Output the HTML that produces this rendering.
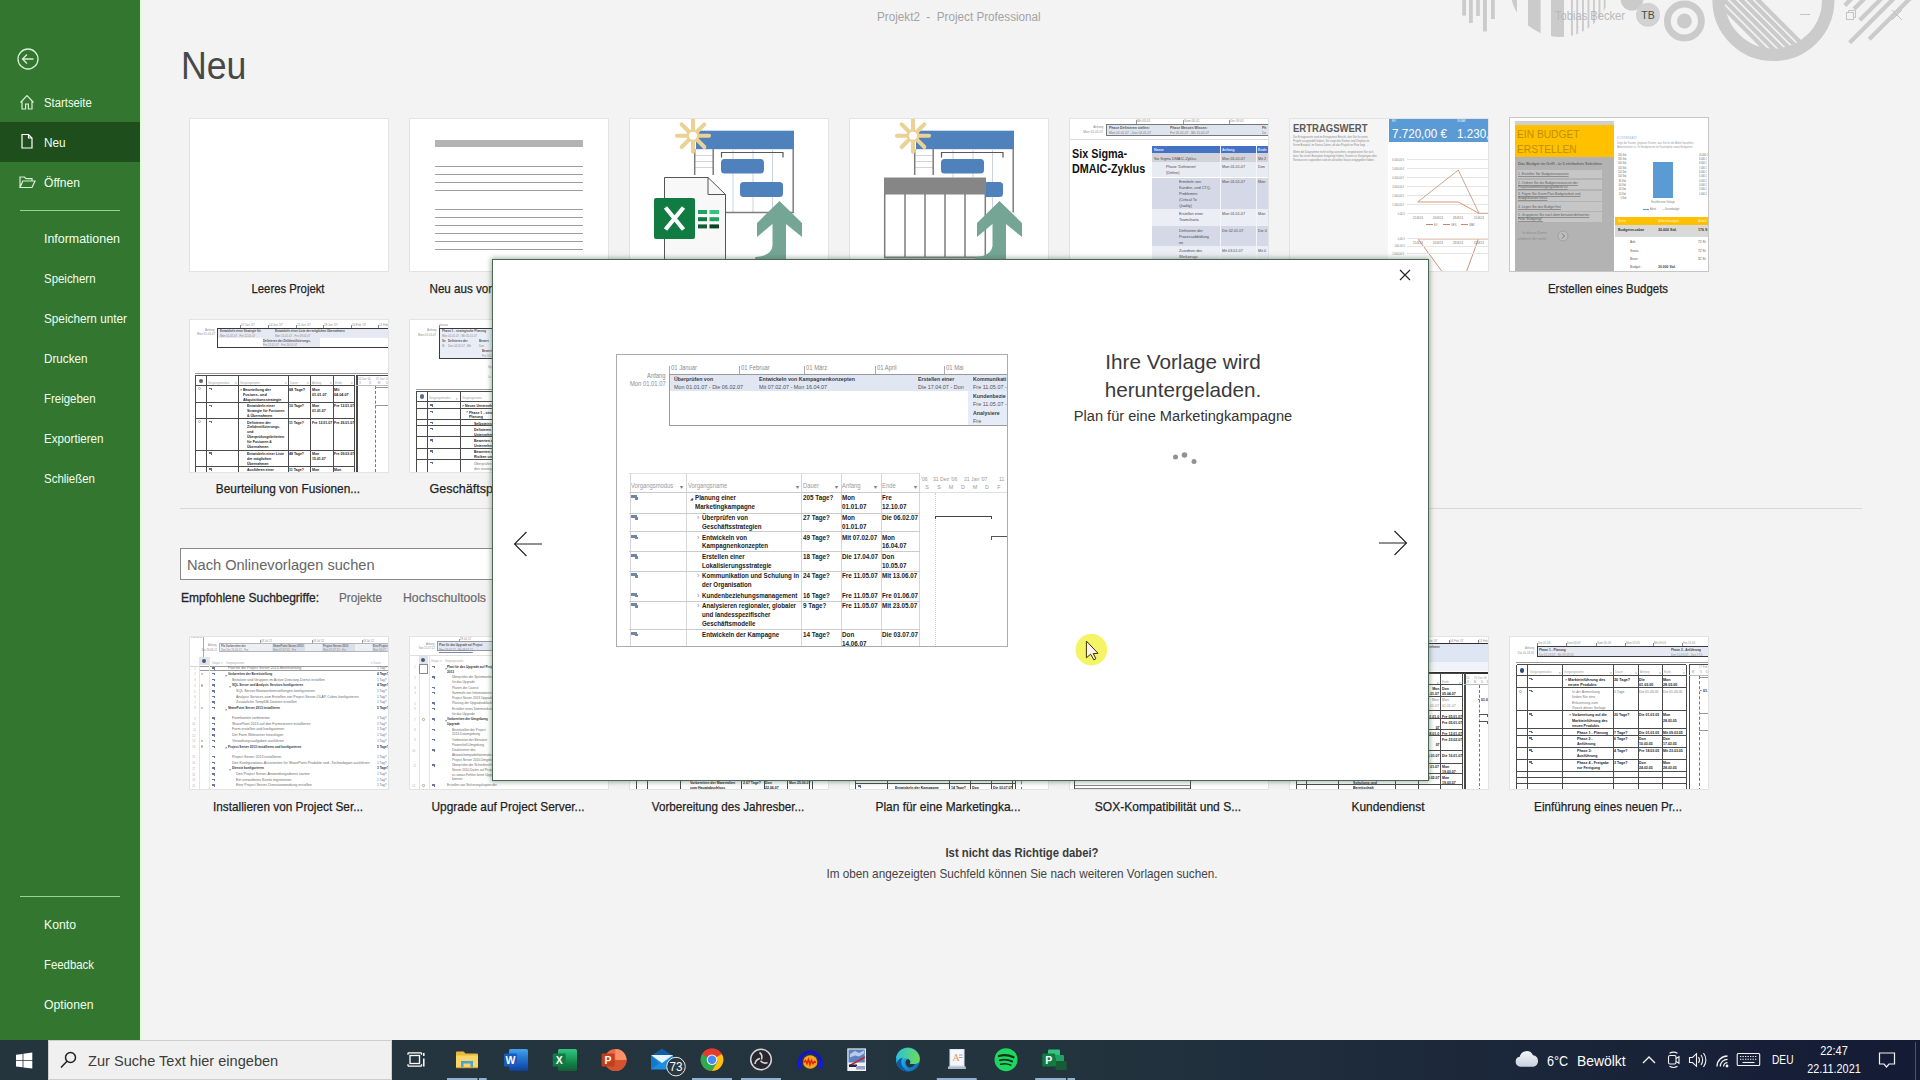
<!DOCTYPE html>
<html lang="de">
<head>
<meta charset="utf-8">
<title>Projekt2 - Project Professional</title>
<style>
*{box-sizing:border-box;margin:0;padding:0}
html,body{width:1920px;height:1080px;overflow:hidden;background:#f3f3f3;font-family:"Liberation Sans",sans-serif;color:#262626}
.abs{position:absolute}
#side{position:absolute;left:0;top:0;width:140px;height:1040px;background:#33762f}
#side .it{position:absolute;left:0;width:140px;height:40px;color:#f1fff0;font-size:12.5px;line-height:40px;padding-left:44px;white-space:nowrap}
#side .sel{background:#1e4e1c;line-height:42px}
#side .sep{position:absolute;left:20px;width:100px;height:1px;background:#9ad195}
#side svg{position:absolute;left:18px;top:10px}
#main{position:absolute;left:140px;top:0;width:1780px;height:1040px;overflow:hidden}
.tile{position:absolute;width:200px;height:154px;background:#fff;border:1px solid #e3e3e3;overflow:hidden}
.lbl{position:absolute;width:220px;margin-left:-1.5px;text-align:center;font-size:12.8px;color:#1f1f1f;white-space:nowrap;line-height:16px;transform:scaleX(.935);-webkit-text-stroke:0.25px #1f1f1f}
.t{position:absolute;white-space:nowrap}
.sx{display:inline-block;transform-origin:0 50%}
#ttl{transform:scaleX(0.935);transform-origin:0 50%}
#h1{transform:scaleX(0.915);transform-origin:0 50%}
#l_r1t1{transform:scaleX(0.885);transform-origin:50% 50%}
#srch{transform:scaleX(1.007);transform-origin:0 50%}
#emp{transform:scaleX(0.961);transform-origin:0 50%}
#proj{transform:scaleX(0.938);transform-origin:0 50%}
#hoch{transform:scaleX(0.979);transform-origin:0 50%}
#usr{transform:scaleX(0.892);transform-origin:0 50%}
#l_r1t7{transform:scaleX(0.893);transform-origin:50% 50%}
#d1{transform:scaleX(0.987);transform-origin:50% 50%}
#d2{transform:scaleX(0.942);transform-origin:50% 50%}
#q1{transform:scaleX(0.882);transform-origin:50% 50%}
#q2{transform:scaleX(0.918);transform-origin:50% 50%}
#l_r3t3{transform:scaleX(0.912);transform-origin:50% 50%}
#l_r3t4{transform:scaleX(0.931);transform-origin:50% 50%}
#l_r3t5{transform:scaleX(0.940);transform-origin:50% 50%}
#l_r3t6{transform:scaleX(0.933);transform-origin:50% 50%}
#l_r3t1{transform:scaleX(0.921);transform-origin:50% 50%}
#l_r2t1{transform:scaleX(0.926);transform-origin:50% 50%}
#l_r3t7{transform:scaleX(0.915);transform-origin:50% 50%}
#tsr{transform:scaleX(0.972);transform-origin:0 50%}
#s4{transform:scaleX(0.994);transform-origin:0 50%}
#s5{transform:scaleX(0.915);transform-origin:0 50%}
#s6{transform:scaleX(0.940);transform-origin:0 50%}
#s7{transform:scaleX(0.935);transform-origin:0 50%}
#s8{transform:scaleX(0.915);transform-origin:0 50%}
#s9{transform:scaleX(0.931);transform-origin:0 50%}
#s10{transform:scaleX(0.917);transform-origin:0 50%}
#s11{transform:scaleX(0.979);transform-origin:0 50%}
#s12{transform:scaleX(0.911);transform-origin:0 50%}
#s13{transform:scaleX(0.976);transform-origin:0 50%}
#s1{transform:scaleX(0.905);transform-origin:0 50%}
#s2{transform:scaleX(0.942);transform-origin:0 50%}
#s3{transform:scaleX(0.965);transform-origin:0 50%}
#tw1{transform:scaleX(0.902);transform-origin:0 50%}
#tw2{transform:scaleX(0.991);transform-origin:0 50%}
#tdeu{transform:scaleX(0.848);transform-origin:0 50%}
#ttime{transform:scaleX(0.916);transform-origin:50% 50%}
#tdate{transform:scaleX(0.902);transform-origin:50% 50%}
#l_r1t2{transform:scaleX(0.908);transform-origin:50% 50%}
#l_r2t2{transform:scaleX(0.981);transform-origin:50% 50%}
#l_r3t2{transform:scaleX(0.927);transform-origin:50% 50%}

</style>
</head>
<body>
<div id="side">
  <svg style="left:16px;top:47px" width="24" height="24" viewBox="0 0 24 24" fill="none" stroke="#d9efd6" stroke-width="1.3"><circle cx="12" cy="12" r="10"/><path d="M17.5 12H7M11 7.5L6.5 12l4.500 4.500"/></svg>
  <div class="it" style="top:83px"><svg width="18" height="18" viewBox="0 0 18 18" fill="none" stroke="#d9efd6" stroke-width="1.2"><path d="M2.500 9.500L9 2.700l6.500 6.800M4 8v8h3.600v-5h2.800v5H14V8"/></svg><span class="sx" id="s1">Startseite</span></div>
  <div class="it sel" style="top:122px"><svg width="18" height="18" viewBox="0 0 18 18" fill="none" stroke="#ffffff" stroke-width="1.2"><path d="M4 2.500h6.500l3.500 3.500v10H4zM10.500 2.500v3.500H14"/></svg><span class="sx" id="s2">Neu</span></div>
  <div class="it" style="top:163px"><svg width="18" height="18" viewBox="0 0 18 18" fill="none" stroke="#d9efd6" stroke-width="1.2"><path d="M2 14.500V4h4.500l1.500 1.700h6V8M2 14.500L4.800 8H17l-3 6.500z"/></svg><span class="sx" id="s3">Öffnen</span></div>
  <div class="sep" style="top:210px"></div>
  <div class="it" style="top:219px"><span class="sx" id="s4">Informationen</span></div>
  <div class="it" style="top:259px"><span class="sx" id="s5">Speichern</span></div>
  <div class="it" style="top:299px"><span class="sx" id="s6">Speichern unter</span></div>
  <div class="it" style="top:339px"><span class="sx" id="s7">Drucken</span></div>
  <div class="it" style="top:379px"><span class="sx" id="s8">Freigeben</span></div>
  <div class="it" style="top:419px"><span class="sx" id="s9">Exportieren</span></div>
  <div class="it" style="top:459px"><span class="sx" id="s10">Schließen</span></div>
  <div class="sep" style="top:896px"></div>
  <div class="it" style="top:905px"><span class="sx" id="s11">Konto</span></div>
  <div class="it" style="top:945px"><span class="sx" id="s12">Feedback</span></div>
  <div class="it" style="top:985px"><span class="sx" id="s13">Optionen</span></div>
</div>
<div class="abs" id="halo" style="left:140px;top:0;width:5px;height:1040px;background:linear-gradient(90deg,#e0fbd9,#ecf7e8 50%,#f3f3f3)"></div>
<div id="main">
<svg class="abs" style="left:1300px;top:0" width="480" height="70" viewBox="1440 0 480 70">
<defs><clipPath id="cpA"><circle cx="1560" cy="-13" r="50"/></clipPath><clipPath id="cpB"><circle cx="1773.400" cy="0" r="49"/></clipPath></defs>
<rect x="1462.2" y="0" width="3.8" height="15.6" fill="#cbcbcb"/>
<rect x="1469" y="0" width="3.8" height="23" fill="#cbcbcb"/>
<rect x="1476.2" y="0" width="3.6" height="16" fill="#cbcbcb"/>
<rect x="1483" y="0" width="3.9" height="31.5" fill="#cbcbcb"/>
<rect x="1491" y="0" width="3.8" height="19" fill="#cbcbcb"/>
<g clip-path="url(#cpA)" fill="#cbcbcb">
<path d="M1508 0H1517V14Z"/>
<rect x="1528" y="0" width="12.6" height="40"/>
<rect x="1551" y="0" width="13" height="40"/>
<rect x="1571" y="0" width="1.900" height="40"/>
<rect x="1576.25" y="0" width="1.900" height="40"/>
<rect x="1582" y="0" width="1.900" height="40"/>
<rect x="1587.5" y="0" width="1.900" height="40"/>
<rect x="1593" y="0" width="1.900" height="40"/>
<rect x="1598.5" y="0" width="1.900" height="40"/>
<rect x="1603.75" y="0" width="1.900" height="40"/>
<rect x="1608" y="0" width="1.900" height="40"/>
</g>
<circle cx="1632" cy="-1" r="11.500" fill="#cbcbcb"/>
<circle cx="1648" cy="14.800" r="12" fill="#d2d2d2"/>
<circle cx="1684.400" cy="21" r="17" fill="none" stroke="#cbcbcb" stroke-width="6.800"/><circle cx="1684.400" cy="21" r="7.400" fill="#cbcbcb"/>
<circle cx="1773.400" cy="0" r="54.800" fill="none" stroke="#cbcbcb" stroke-width="12.500"/>
<g clip-path="url(#cpB)" stroke="#cbcbcb" stroke-width="4.300">
<line x1="1754" y1="-4" x2="1814" y2="56"/>
<line x1="1745.6" y1="-4" x2="1805.6" y2="56"/>
<line x1="1737.2" y1="-4" x2="1797.2" y2="56"/>
<line x1="1728.8" y1="-4" x2="1788.8" y2="56"/>
<line x1="1720.4" y1="-4" x2="1780.4" y2="56"/>
<line x1="1712" y1="-4" x2="1772" y2="56"/>
</g>
<g stroke="#cbcbcb" stroke-width="4.200">
<line x1="1853.2" y1="-3" x2="1844.8" y2="5.4"/>
<line x1="1866" y1="-3" x2="1854" y2="9"/>
<line x1="1883" y1="-3" x2="1859.7" y2="20.3"/>
<line x1="1895.3" y1="-3" x2="1849.6" y2="42.7"/>
<line x1="1911.5" y1="-3" x2="1869.2" y2="39.3"/>
</g>
<g stroke="#c4c4c4" stroke-width="1" fill="none"><path d="M1800 14.500H1810"/><rect x="1846.500" y="12.500" width="7" height="7"/><path d="M1848.500 12.500V10.500H1855.500V17.500H1853.500"/><path d="M1892 10L1902 20M1902 10L1892 20"/></g>
</svg>
<div class="t" id="usr" style="left:1415px;top:8px;font-size:12.500px;line-height:16px;color:#b9b9b9">Tobias Becker</div>
<div class="t" style="left:1498px;top:7px;width:20px;text-align:center;font-size:10.500px;line-height:16px;color:#4a4a4a">TB</div>

  <div class="t" id="ttl" style="left:737px;top:9.200px;font-size:12.5px;color:#a3a3a3;line-height:16px">Projekt2&nbsp; -&nbsp; Project Professional</div>
  <div class="t" id="h1" style="left:40.500px;top:42px;font-size:39px;line-height:48px;color:#484848">Neu</div>
  <!-- row 1 -->
  <div class="tile" id="r1t1" style="left:49px;top:118px"></div>
  <div class="lbl" id="l_r1t1" style="left:39px;top:281px">Leeres Projekt</div>
  <div class="tile" id="r1t2" style="left:269px;top:118px">
    <div class="abs" style="left:25px;top:21px;width:148px;height:7px;background:#b3b3b3"></div><div class="abs" style="left:25px;top:47px;width:148px;height:1px;background:#9d9d9d"></div><div class="abs" style="left:25px;top:55px;width:148px;height:1px;background:#9d9d9d"></div><div class="abs" style="left:25px;top:63px;width:148px;height:1px;background:#9d9d9d"></div><div class="abs" style="left:25px;top:71px;width:148px;height:1px;background:#9d9d9d"></div><div class="abs" style="left:25px;top:90px;width:148px;height:1px;background:#9d9d9d"></div><div class="abs" style="left:25px;top:98px;width:148px;height:1px;background:#9d9d9d"></div><div class="abs" style="left:25px;top:106px;width:148px;height:1px;background:#9d9d9d"></div><div class="abs" style="left:25px;top:114px;width:148px;height:1px;background:#9d9d9d"></div><div class="abs" style="left:25px;top:122px;width:148px;height:1px;background:#9d9d9d"></div><div class="abs" style="left:25px;top:130px;width:148px;height:1px;background:#9d9d9d"></div>
  </div>
  <div class="lbl" id="l_r1t2" style="left:259px;top:281px">Neu aus vorhandenem Projekt</div>
  <div class="tile" id="r1t3" style="left:489px;top:118px"><svg class="abs" style="left:0;top:0" width="198" height="152" viewBox="630 119 198 152">
<rect x="696" y="130.700" width="98" height="18.500" fill="#4f81bd"/>
<g stroke="#c9d3e4" stroke-width="1"><path d="M733 150V212M753 150V212M772.500 150V212"/></g>
<g stroke="#d5d5d5" stroke-width="1"><path d="M695 155.500H713M695 161.500H713M695 167.500H713"/></g>
<g stroke="#7d7d7d" stroke-width="1.500" fill="none"><path d="M694.700 149V175M713.200 149V175M793.200 149V212.500H726"/></g>
<path d="M721.500 157.500V152.500H783V157.500" stroke="#595959" stroke-width="1.200" fill="none"/>
<rect x="721" y="159" width="43" height="14.500" rx="3.500" fill="#4f81bd"/>
<rect x="740" y="182" width="43" height="15" rx="3.500" fill="#4f81bd"/>
<path d="M779.5 201 L802 223 L802 237 L786 224 L786 262 L753.5 262 L755.5 257 Q771.5 256 772.5 246 L772.5 224 L757 237 L757 223 Z" fill="#74a595"/>
<path d="M664.500 177.500H708L725.500 194.500V272H664.500Z" fill="#f8f8f8" stroke="#555" stroke-width="1"/>
<path d="M708 177.500V194.500H725.500" fill="none" stroke="#555" stroke-width="1"/>
<rect x="654" y="198" width="41" height="41" rx="2" fill="#107c41"/>
<path d="M665.500 207.500L683.500 229.500M683.500 207.500L665.500 229.500" stroke="#fff" stroke-width="4.200"/>
<rect x="698" y="210" width="9" height="4" fill="#21a366"/><rect x="709.500" y="210" width="9.500" height="4" fill="#33c481"/>
<rect x="698" y="217.2" width="9" height="4" fill="#107c41"/><rect x="709.500" y="217.2" width="9.500" height="4" fill="#21a366"/>
<rect x="698" y="224.4" width="9" height="4" fill="#185c37"/><rect x="709.500" y="224.4" width="9.500" height="4" fill="#0e4224"/>
<g stroke="#ead194" stroke-width="4.1" stroke-linecap="round"><line x1="699.0" y1="135.7" x2="709.0" y2="135.7"/><line x1="697.2" y1="139.9" x2="704.3" y2="147.0"/><line x1="693.0" y1="141.7" x2="693.0" y2="151.7"/><line x1="688.8" y1="139.9" x2="681.7" y2="147.0"/><line x1="687.0" y1="135.7" x2="677.0" y2="135.7"/><line x1="688.8" y1="131.5" x2="681.7" y2="124.4"/><line x1="693.0" y1="129.7" x2="693.0" y2="119.7"/><line x1="697.2" y1="131.5" x2="704.3" y2="124.4"/></g><circle cx="693" cy="135.7" r="5.200" fill="#fff" stroke="#ead194" stroke-width="2.600"/>
</svg></div>
  <div class="tile" id="r1t4" style="left:709px;top:118px"><svg class="abs" style="left:0;top:0" width="198" height="152" viewBox="850 119 198 152">
<rect x="916" y="130.700" width="98" height="18.500" fill="#4f81bd"/>
<g stroke="#c9d3e4" stroke-width="1"><path d="M953 150V178M973 150V178M992.500 150V212"/></g>
<g stroke="#d5d5d5" stroke-width="1"><path d="M915 155.500H933M915 161.500H933M915 167.500H933"/></g>
<g stroke="#7d7d7d" stroke-width="1.500" fill="none"><path d="M914.700 149V175M933.200 149V175M1013.200 149V212.500"/></g>
<path d="M941.500 157.500V152.500H1003V157.500" stroke="#595959" stroke-width="1.200" fill="none"/>
<rect x="941" y="159" width="43" height="14.500" rx="3.500" fill="#4f81bd"/>
<rect x="980" y="182" width="23" height="15" rx="3.500" fill="#4f81bd"/>
<rect x="884" y="177.500" width="102" height="82" fill="#fff"/>
<rect x="884" y="177.500" width="102" height="17" fill="#868686"/>
<g stroke="#7d7d7d" stroke-width="1.500" fill="none"><path d="M884.700 194V258M905 194V258M925 194V258M945 194V258M965 194V258M985.300 194V258"/><path d="M884 257.500H986" stroke-width="2"/></g>
<path d="M999.5 201 L1022 223 L1022 237 L1006 224 L1006 262 L973.5 262 L975.5 257 Q991.5 256 992.5 246 L992.5 224 L977 237 L977 223 Z" fill="#74a595"/>
<g stroke="#ead194" stroke-width="4.1" stroke-linecap="round"><line x1="919.0" y1="135.7" x2="929.0" y2="135.7"/><line x1="917.2" y1="139.9" x2="924.3" y2="147.0"/><line x1="913.0" y1="141.7" x2="913.0" y2="151.7"/><line x1="908.8" y1="139.9" x2="901.7" y2="147.0"/><line x1="907.0" y1="135.7" x2="897.0" y2="135.7"/><line x1="908.8" y1="131.5" x2="901.7" y2="124.4"/><line x1="913.0" y1="129.7" x2="913.0" y2="119.7"/><line x1="917.2" y1="131.5" x2="924.3" y2="124.4"/></g><circle cx="913" cy="135.7" r="5.200" fill="#fff" stroke="#ead194" stroke-width="2.600"/>
</svg></div>
  <div class="tile" id="r1t5" style="left:929px;top:118px"><div class="t" style="top:-0.4px;font-size:3.6px;line-height:5.6px;color:#8c8c8c;left:67.0px;transform-origin:0 50%;transform:scaleX(0.9);">Mit 03.01</div>
<div class="abs" style="left:66.0px;top:1.0px;width:0.6px;height:3.5px;background:#999;"></div>
<div class="t" style="top:-0.4px;font-size:3.6px;line-height:5.6px;color:#8c8c8c;left:114.0px;transform-origin:0 50%;transform:scaleX(0.9);">Sam 06.01</div>
<div class="abs" style="left:113.0px;top:1.0px;width:0.6px;height:3.5px;background:#999;"></div>
<div class="t" style="top:-0.4px;font-size:3.6px;line-height:5.6px;color:#8c8c8c;left:160.0px;transform-origin:0 50%;transform:scaleX(0.9);">Die 09.01</div>
<div class="abs" style="left:159.0px;top:1.0px;width:0.6px;height:3.5px;background:#999;"></div>
<div class="t" style="top:5.6px;font-size:3.6px;line-height:5.6px;color:#8c8c8c;right:calc(100% - 33.0px);transform-origin:100% 50%;transform:scaleX(0.9);">Anfang</div>
<div class="t" style="top:10.6px;font-size:3.6px;line-height:5.6px;color:#8c8c8c;right:calc(100% - 33.0px);transform-origin:100% 50%;transform:scaleX(0.9);">Mon 01.01.07</div>
<div class="abs" style="left:35.5px;top:4.5px;width:170.0px;height:12.5px;background:#dfe5ee;border:.7px solid #777;"></div>
<div class="t" style="top:6.5px;font-size:3.8px;line-height:5.8px;color:#555;font-weight:bold;left:39.0px;transform-origin:0 50%;transform:scaleX(0.9);">Phase Definieren stellen:</div>
<div class="t" style="top:12.1px;font-size:3.6px;line-height:5.6px;color:#777;left:39.0px;transform-origin:0 50%;transform:scaleX(0.9);">Mon 01.01.07 - Don 04.01.07</div>
<div class="t" style="top:6.5px;font-size:3.8px;line-height:5.8px;color:#555;font-weight:bold;left:100.0px;transform-origin:0 50%;transform:scaleX(0.9);">Phase Messen Wissen:</div>
<div class="t" style="top:12.1px;font-size:3.6px;line-height:5.6px;color:#777;left:100.0px;transform-origin:0 50%;transform:scaleX(0.9);">Fre 05.01.07 - Mit 10.01.07</div>
<div class="t" style="top:6.5px;font-size:3.8px;line-height:5.8px;color:#555;font-weight:bold;left:192.0px;transform-origin:0 50%;transform:scaleX(0.9);">Ph</div>
<div class="t" style="top:12.1px;font-size:3.6px;line-height:5.6px;color:#777;left:192.0px;transform-origin:0 50%;transform:scaleX(0.9);">Do</div>
<div class="abs" style="left:0.0px;top:20.0px;width:199.0px;height:1.0px;background:#d9d9d9;"></div>
<div class="t" style="top:27.5px;font-size:12px;line-height:14px;color:#111;font-weight:bold;left:1.5px;transform-origin:0 50%;transform:scaleX(0.9);">Six Sigma-</div>
<div class="t" style="top:42.7px;font-size:12px;line-height:14px;color:#111;font-weight:bold;left:1.5px;transform-origin:0 50%;transform:scaleX(0.9);">DMAIC-Zyklus</div>
<div class="abs" style="left:82.0px;top:26.7px;width:118.0px;height:7.5px;background:#4472c4;"></div>
<div class="t" style="top:28.4px;font-size:4px;line-height:6px;color:#dfe8ff;font-weight:bold;left:84.0px;transform-origin:0 50%;transform:scaleX(0.9);">Name</div>
<div class="t" style="top:28.4px;font-size:4px;line-height:6px;color:#dfe8ff;font-weight:bold;left:152.0px;transform-origin:0 50%;transform:scaleX(0.9);">Anfang</div>
<div class="t" style="top:28.4px;font-size:4px;line-height:6px;color:#dfe8ff;font-weight:bold;left:188.0px;transform-origin:0 50%;transform:scaleX(0.9);">Ende</div>
<div class="abs" style="left:82.0px;top:34.2px;width:118.0px;height:8.5px;background:#d2d3d9;"></div>
<div class="abs" style="left:82.0px;top:42.7px;width:118.0px;height:15.8px;background:#e9ebf3;"></div>
<div class="abs" style="left:82.0px;top:58.5px;width:118.0px;height:31.5px;background:#d5d9e7;"></div>
<div class="abs" style="left:82.0px;top:90.0px;width:118.0px;height:17.0px;background:#eceef5;"></div>
<div class="abs" style="left:82.0px;top:107.0px;width:118.0px;height:20.0px;background:#d5d9e7;"></div>
<div class="abs" style="left:82.0px;top:127.0px;width:118.0px;height:26.0px;background:#eceef5;"></div>
<div class="abs" style="left:150.0px;top:26.7px;width:0.8px;height:126.3px;background:#f4f5fa;"></div>
<div class="abs" style="left:186.0px;top:26.7px;width:0.8px;height:126.3px;background:#f4f5fa;"></div>
<div class="t" style="top:36.8px;font-size:4.2px;line-height:6.2px;color:#4a4a4a;left:84.0px;transform-origin:0 50%;transform:scaleX(0.9);">Six Sigma DMAIC-Zyklus</div>
<div class="t" style="top:36.8px;font-size:4.2px;line-height:6.2px;color:#4a4a4a;left:152.0px;transform-origin:0 50%;transform:scaleX(0.9);">Mon 01.01.07</div>
<div class="t" style="top:36.8px;font-size:4.2px;line-height:6.2px;color:#4a4a4a;left:188.0px;transform-origin:0 50%;transform:scaleX(0.9);">Mit 2</div>
<div class="t" style="top:45.3px;font-size:4.2px;line-height:6.2px;color:#4a4a4a;left:96.0px;transform-origin:0 50%;transform:scaleX(0.9);">Phase 'Definieren'</div>
<div class="t" style="top:51.4px;font-size:4.2px;line-height:6.2px;color:#4a4a4a;left:96.0px;transform-origin:0 50%;transform:scaleX(0.9);">(Define)</div>
<div class="t" style="top:45.3px;font-size:4.2px;line-height:6.2px;color:#4a4a4a;left:152.0px;transform-origin:0 50%;transform:scaleX(0.9);">Mon 01.01.07</div>
<div class="t" style="top:45.3px;font-size:4.2px;line-height:6.2px;color:#4a4a4a;left:188.0px;transform-origin:0 50%;transform:scaleX(0.9);">Don</div>
<div class="t" style="top:59.8px;font-size:4.2px;line-height:6.2px;color:#4a4a4a;left:109.0px;transform-origin:0 50%;transform:scaleX(0.9);">Ermitteln von</div>
<div class="t" style="top:65.9px;font-size:4.2px;line-height:6.2px;color:#4a4a4a;left:109.0px;transform-origin:0 50%;transform:scaleX(0.9);">Kunden- und CTQ-</div>
<div class="t" style="top:72.0px;font-size:4.2px;line-height:6.2px;color:#4a4a4a;left:109.0px;transform-origin:0 50%;transform:scaleX(0.9);">Problemen</div>
<div class="t" style="top:78.1px;font-size:4.2px;line-height:6.2px;color:#4a4a4a;left:109.0px;transform-origin:0 50%;transform:scaleX(0.9);">(Critical To</div>
<div class="t" style="top:84.2px;font-size:4.2px;line-height:6.2px;color:#4a4a4a;left:109.0px;transform-origin:0 50%;transform:scaleX(0.9);">Quality)</div>
<div class="t" style="top:59.8px;font-size:4.2px;line-height:6.2px;color:#4a4a4a;left:152.0px;transform-origin:0 50%;transform:scaleX(0.9);">Mon 01.01.07</div>
<div class="t" style="top:59.8px;font-size:4.2px;line-height:6.2px;color:#4a4a4a;left:188.0px;transform-origin:0 50%;transform:scaleX(0.9);">Mon</div>
<div class="t" style="top:92.3px;font-size:4.2px;line-height:6.2px;color:#4a4a4a;left:109.0px;transform-origin:0 50%;transform:scaleX(0.9);">Erstellen einer</div>
<div class="t" style="top:98.4px;font-size:4.2px;line-height:6.2px;color:#4a4a4a;left:109.0px;transform-origin:0 50%;transform:scaleX(0.9);">Teamcharta</div>
<div class="t" style="top:92.3px;font-size:4.2px;line-height:6.2px;color:#4a4a4a;left:152.0px;transform-origin:0 50%;transform:scaleX(0.9);">Mon 01.01.07</div>
<div class="t" style="top:92.3px;font-size:4.2px;line-height:6.2px;color:#4a4a4a;left:188.0px;transform-origin:0 50%;transform:scaleX(0.9);">Mon</div>
<div class="t" style="top:108.8px;font-size:4.2px;line-height:6.2px;color:#4a4a4a;left:109.0px;transform-origin:0 50%;transform:scaleX(0.9);">Definieren der</div>
<div class="t" style="top:114.9px;font-size:4.2px;line-height:6.2px;color:#4a4a4a;left:109.0px;transform-origin:0 50%;transform:scaleX(0.9);">Prozessabbildung</div>
<div class="t" style="top:121.0px;font-size:4.2px;line-height:6.2px;color:#4a4a4a;left:109.0px;transform-origin:0 50%;transform:scaleX(0.9);">en</div>
<div class="t" style="top:108.8px;font-size:4.2px;line-height:6.2px;color:#4a4a4a;left:152.0px;transform-origin:0 50%;transform:scaleX(0.9);">Die 02.01.07</div>
<div class="t" style="top:108.8px;font-size:4.2px;line-height:6.2px;color:#4a4a4a;left:188.0px;transform-origin:0 50%;transform:scaleX(0.9);">Die 0</div>
<div class="t" style="top:129.3px;font-size:4.2px;line-height:6.2px;color:#4a4a4a;left:109.0px;transform-origin:0 50%;transform:scaleX(0.9);">Zuordnen des</div>
<div class="t" style="top:135.4px;font-size:4.2px;line-height:6.2px;color:#4a4a4a;left:109.0px;transform-origin:0 50%;transform:scaleX(0.9);">Werkzeugs</div>
<div class="t" style="top:129.3px;font-size:4.2px;line-height:6.2px;color:#4a4a4a;left:152.0px;transform-origin:0 50%;transform:scaleX(0.9);">Mit 03.01.07</div>
<div class="t" style="top:129.3px;font-size:4.2px;line-height:6.2px;color:#4a4a4a;left:188.0px;transform-origin:0 50%;transform:scaleX(0.9);">Mit 0</div>
</div>
  <div class="tile" id="r1t6" style="left:1149px;top:118px"><div class="abs" style="left:0.0px;top:0.0px;width:98.0px;height:152.0px;background:#f5f5f5;"></div>
<div class="t" style="top:2.5px;font-size:11px;line-height:13px;color:#5a5a5a;font-weight:bold;left:3.3px;transform-origin:0 50%;transform:scaleX(0.865);">ERTRAGSWERT</div>
<div class="t" style="top:16.1px;font-size:2.9px;line-height:4.9px;color:#8a8a8a;left:3.3px;transform-origin:0 50%;transform:scaleX(0.93);">Die Ertragswerte sind im Ertragswert-Bericht, den Sie für einen</div>
<div class="t" style="top:19.9px;font-size:2.9px;line-height:4.9px;color:#8a8a8a;left:3.3px;transform-origin:0 50%;transform:scaleX(0.93);">Projekt ausgewählt haben. Sie zeigt den Kosten und Zeitplan im</div>
<div class="t" style="top:23.7px;font-size:2.9px;line-height:4.9px;color:#8a8a8a;left:3.3px;transform-origin:0 50%;transform:scaleX(0.93);">Ihrem Beispiel, im Status-Daten, ob das Projekt im Plan liegt.</div>
<div class="t" style="top:31.2px;font-size:2.9px;line-height:4.9px;color:#8a8a8a;left:3.3px;transform-origin:0 50%;transform:scaleX(0.93);">Wenn die Diagramme nicht richtig aussehen, vergewissern Sie sich,</div>
<div class="t" style="top:35.0px;font-size:2.9px;line-height:4.9px;color:#8a8a8a;left:3.3px;transform-origin:0 50%;transform:scaleX(0.93);">dass Sie einen Basisplan festgelegt haben, Kosten zu Vorgängen oder</div>
<div class="t" style="top:38.8px;font-size:2.9px;line-height:4.9px;color:#8a8a8a;left:3.3px;transform-origin:0 50%;transform:scaleX(0.93);">Ressourcen zugeordnet und ein aktuelles Status eingegeben haben.</div>
<div class="abs" style="left:99.0px;top:-1.0px;width:101.0px;height:23.7px;background:#5b9bd5;"></div>
<div class="t" style="top:0.4px;font-size:3px;line-height:5px;color:#e8f1fb;left:102.0px;transform-origin:0 50%;">EV</div>
<div class="t" style="top:0.4px;font-size:3px;line-height:5px;color:#e8f1fb;left:167.0px;transform-origin:0 50%;">SV/AK</div>
<div class="t" style="top:7.8px;font-size:12.5px;line-height:14.5px;color:#fff;left:101.7px;transform-origin:0 50%;transform:scaleX(0.93);">7.720,00 €</div>
<div class="t" style="top:7.8px;font-size:12.5px;line-height:14.5px;color:#fff;left:166.7px;transform-origin:0 50%;transform:scaleX(0.93);">1.230,</div>
<div class="abs" style="left:116.7px;top:40.0px;width:83.3px;height:0.8px;background:#e6e6e6;"></div>
<div class="t" style="top:38.5px;font-size:2.8px;line-height:4.8px;color:#777;right:calc(100% - 114.5px);transform-origin:100% 50%;transform:scaleX(0.9);">6.000,00 €</div>
<div class="abs" style="left:116.7px;top:49.3px;width:83.3px;height:0.8px;background:#e6e6e6;"></div>
<div class="t" style="top:47.8px;font-size:2.8px;line-height:4.8px;color:#777;right:calc(100% - 114.5px);transform-origin:100% 50%;transform:scaleX(0.9);">5.000,00 €</div>
<div class="abs" style="left:116.7px;top:58.3px;width:83.3px;height:0.8px;background:#e6e6e6;"></div>
<div class="t" style="top:56.8px;font-size:2.8px;line-height:4.8px;color:#777;right:calc(100% - 114.5px);transform-origin:100% 50%;transform:scaleX(0.9);">4.000,00 €</div>
<div class="abs" style="left:116.7px;top:67.3px;width:83.3px;height:0.8px;background:#e6e6e6;"></div>
<div class="t" style="top:65.8px;font-size:2.8px;line-height:4.8px;color:#777;right:calc(100% - 114.5px);transform-origin:100% 50%;transform:scaleX(0.9);">3.000,00 €</div>
<div class="abs" style="left:116.7px;top:76.3px;width:83.3px;height:0.8px;background:#e6e6e6;"></div>
<div class="t" style="top:74.8px;font-size:2.8px;line-height:4.8px;color:#777;right:calc(100% - 114.5px);transform-origin:100% 50%;transform:scaleX(0.9);">2.000,00 €</div>
<div class="abs" style="left:116.7px;top:85.3px;width:83.3px;height:0.8px;background:#e6e6e6;"></div>
<div class="t" style="top:83.8px;font-size:2.8px;line-height:4.8px;color:#777;right:calc(100% - 114.5px);transform-origin:100% 50%;transform:scaleX(0.9);">1.000,00 €</div>
<div class="abs" style="left:116.7px;top:94.3px;width:83.3px;height:0.8px;background:#e6e6e6;"></div>
<div class="t" style="top:92.8px;font-size:2.8px;line-height:4.8px;color:#777;right:calc(100% - 114.5px);transform-origin:100% 50%;transform:scaleX(0.9);">0,00 €</div>
<svg class="abs" style="left:0;top:0" width="198" height="152" viewBox="1290 119 198 152" fill="none" stroke-width=".9"><path d="M1417.700 202L1458.300 170L1479 213.300H1490" stroke="#c49a86"/><path d="M1417.700 202H1458.300L1479 213.300" stroke="#d98b5f"/><path d="M1418.300 239.300L1441.700 271M1466.700 271L1478.300 239.300" stroke="#c8876a"/><path d="M1418 239H1490" stroke="#e0976c"/></svg>
<div class="t" style="top:96.8px;font-size:2.8px;line-height:4.8px;color:#666;left:127.7px;width:0;display:flex;justify-content:center;transform:scaleX(0.9);">21.08.13</div>
<div class="t" style="top:121.5px;font-size:2.8px;line-height:4.8px;color:#666;left:127.7px;width:0;display:flex;justify-content:center;transform:scaleX(0.9);">21.08.13</div>
<div class="t" style="top:96.8px;font-size:2.8px;line-height:4.8px;color:#666;left:148.0px;width:0;display:flex;justify-content:center;transform:scaleX(0.9);">24.08.13</div>
<div class="t" style="top:121.5px;font-size:2.8px;line-height:4.8px;color:#666;left:148.0px;width:0;display:flex;justify-content:center;transform:scaleX(0.9);">24.08.13</div>
<div class="t" style="top:96.8px;font-size:2.8px;line-height:4.8px;color:#666;left:168.3px;width:0;display:flex;justify-content:center;transform:scaleX(0.9);">28.08.13</div>
<div class="t" style="top:121.5px;font-size:2.8px;line-height:4.8px;color:#666;left:168.3px;width:0;display:flex;justify-content:center;transform:scaleX(0.9);">28.08.13</div>
<div class="t" style="top:96.8px;font-size:2.8px;line-height:4.8px;color:#666;left:189.0px;width:0;display:flex;justify-content:center;transform:scaleX(0.9);">31.08.13</div>
<div class="t" style="top:121.5px;font-size:2.8px;line-height:4.8px;color:#666;left:189.0px;width:0;display:flex;justify-content:center;transform:scaleX(0.9);">31.08.13</div>
<div class="t" style="top:103.8px;font-size:2.8px;line-height:4.8px;color:#777;left:144.0px;transform-origin:0 50%;transform:scaleX(0.9);">EV</div>
<div class="abs" style="left:136.0px;top:105.3px;width:7.0px;height:0.7px;background:#c8876a;"></div>
<div class="t" style="top:103.8px;font-size:2.8px;line-height:4.8px;color:#777;left:161.0px;transform-origin:0 50%;transform:scaleX(0.9);">GES</div>
<div class="abs" style="left:153.0px;top:105.3px;width:7.0px;height:0.7px;background:#c8876a;"></div>
<div class="t" style="top:103.8px;font-size:2.8px;line-height:4.8px;color:#777;left:179.0px;transform-origin:0 50%;transform:scaleX(0.9);">WAK</div>
<div class="abs" style="left:171.0px;top:105.3px;width:7.0px;height:0.7px;background:#c8876a;"></div>
<div class="abs" style="left:116.7px;top:119.3px;width:83.3px;height:0.8px;background:#e6e6e6;"></div>
<div class="t" style="top:117.8px;font-size:2.8px;line-height:4.8px;color:#777;right:calc(100% - 114.5px);transform-origin:100% 50%;transform:scaleX(0.9);">0,00 €</div>
<div class="abs" style="left:116.7px;top:126.7px;width:83.3px;height:0.8px;background:#e6e6e6;"></div>
<div class="t" style="top:125.2px;font-size:2.8px;line-height:4.8px;color:#777;right:calc(100% - 114.5px);transform-origin:100% 50%;transform:scaleX(0.9);">-500,00 €</div>
<div class="abs" style="left:116.7px;top:134.3px;width:83.3px;height:0.8px;background:#e6e6e6;"></div>
<div class="t" style="top:132.8px;font-size:2.8px;line-height:4.8px;color:#777;right:calc(100% - 114.5px);transform-origin:100% 50%;transform:scaleX(0.9);">-1.000,00 €</div>
</div>
  <div class="tile" id="r1t7" style="left:1369px;top:116.500px;height:155.500px;border-color:#c6c6c6"><div class="abs" style="left:5.0px;top:3.2px;width:98.5px;height:152.0px;background:#b3b3b3;"></div>
<div class="abs" style="left:5.0px;top:3.2px;width:98.5px;height:4.5px;background:#cfcfcf;"></div>
<div class="abs" style="left:5.0px;top:7.5px;width:98.5px;height:31.7px;background:#ffc000;"></div>
<div class="t" style="top:10.3px;font-size:11px;line-height:13px;color:#bf8f00;left:7.3px;transform-origin:0 50%;transform:scaleX(0.93);">EIN BUDGET</div>
<div class="t" style="top:25.0px;font-size:11px;line-height:13px;color:#bf8f00;left:7.3px;transform-origin:0 50%;transform:scaleX(0.93);">ERSTELLEN</div>
<div class="t" style="top:43.0px;font-size:4.2px;line-height:6.2px;color:#6a6a6a;font-weight:bold;left:7.5px;transform-origin:0 50%;transform:scaleX(0.93);">Das Budget im Griff - in 5 einfachen Schritten</div>
<div class="abs" style="left:6.7px;top:52.5px;width:85.0px;height:8.3px;background:#c6c6c6;"></div>
<div class="t" style="top:54.8px;font-size:3.6px;line-height:5.6px;color:#5e5e5e;left:8.0px;transform-origin:0 50%;transform:scaleX(0.93);text-decoration:underline;text-decoration-color:#8e8e8e;text-decoration-thickness:.4px;">1. Erstellen Sie Budgetressourcen</div>
<div class="abs" style="left:6.7px;top:62.5px;width:85.0px;height:9.3px;background:#c6c6c6;"></div>
<div class="t" style="top:63.0px;font-size:3.6px;line-height:5.6px;color:#5e5e5e;left:8.0px;transform-origin:0 50%;transform:scaleX(0.93);text-decoration:underline;text-decoration-color:#8e8e8e;text-decoration-thickness:.4px;">2. Ordnen Sie die Budgetressourcen der</div>
<div class="t" style="top:67.6px;font-size:3.6px;line-height:5.6px;color:#5e5e5e;left:8.0px;transform-origin:0 50%;transform:scaleX(0.93);text-decoration:underline;text-decoration-color:#8e8e8e;text-decoration-thickness:.4px;">Projektsammelvorgangsebene zu</div>
<div class="abs" style="left:6.7px;top:73.2px;width:85.0px;height:10.0px;background:#c6c6c6;"></div>
<div class="t" style="top:74.0px;font-size:3.6px;line-height:5.6px;color:#5e5e5e;left:8.0px;transform-origin:0 50%;transform:scaleX(0.93);text-decoration:underline;text-decoration-color:#8e8e8e;text-decoration-thickness:.4px;">3. Fügen Sie Ihrem Plan Budgetarbeit und</div>
<div class="t" style="top:78.6px;font-size:3.6px;line-height:5.6px;color:#5e5e5e;left:8.0px;transform-origin:0 50%;transform:scaleX(0.93);text-decoration:underline;text-decoration-color:#8e8e8e;text-decoration-thickness:.4px;">Budgetkosten hinzu</div>
<div class="abs" style="left:6.7px;top:84.8px;width:85.0px;height:8.4px;background:#c6c6c6;"></div>
<div class="t" style="top:87.1px;font-size:3.6px;line-height:5.6px;color:#5e5e5e;left:8.0px;transform-origin:0 50%;transform:scaleX(0.93);text-decoration:underline;text-decoration-color:#8e8e8e;text-decoration-thickness:.4px;">4. Legen Sie das Budget fest</div>
<div class="abs" style="left:6.7px;top:94.8px;width:85.0px;height:9.4px;background:#c6c6c6;"></div>
<div class="t" style="top:95.3px;font-size:3.6px;line-height:5.6px;color:#5e5e5e;left:8.0px;transform-origin:0 50%;transform:scaleX(0.93);text-decoration:underline;text-decoration-color:#8e8e8e;text-decoration-thickness:.4px;">5. Gruppieren Sie nach dem benutzerdefinierten</div>
<div class="t" style="top:99.9px;font-size:3.6px;line-height:5.6px;color:#5e5e5e;left:8.0px;transform-origin:0 50%;transform:scaleX(0.93);text-decoration:underline;text-decoration-color:#8e8e8e;text-decoration-thickness:.4px;">Feld "Budgettyp"</div>
<div class="t" style="top:113.8px;font-size:3.8px;line-height:5.8px;color:#8a8a8a;right:calc(100% - 36.5px);transform-origin:100% 50%;transform:scaleX(0.95);font-style:italic;">In dieser Demo</div>
<div class="t" style="top:119.2px;font-size:3.8px;line-height:5.8px;color:#8a8a8a;right:calc(100% - 36.5px);transform-origin:100% 50%;transform:scaleX(0.95);font-style:italic;">erfahren Sie mehr</div>
<svg class="abs" style="left:46.500px;top:112px" width="12" height="12" viewBox="0 0 12 12"><circle cx="6" cy="6" r="5" fill="#bdbdbd" stroke="#9a9a9a" stroke-width=".8"/><path d="M5 3.500L7.500 6L5 8.500" fill="none" stroke="#777" stroke-width="1"/></svg>
<div class="t" style="top:18.8px;font-size:3.2px;line-height:5.2px;color:#8fbbe5;left:106.7px;transform-origin:0 50%;transform:scaleX(0.95);">KOSTENSATZ</div>
<div class="t" style="top:23.7px;font-size:2.8px;line-height:4.8px;color:#999;left:106.7px;transform-origin:0 50%;transform:scaleX(0.93);">Zeigt die Kosten, geplante Kosten, was Sie für die Arbeit bezahlen,</div>
<div class="t" style="top:27.0px;font-size:2.8px;line-height:4.8px;color:#999;left:106.7px;transform-origin:0 50%;transform:scaleX(0.93);">Arbeitskosten vs. Ihr Budgetieren im Kostenplan sowie Budgetiert</div>
<div class="t" style="top:36.1px;font-size:2.6px;line-height:4.6px;color:#666;right:calc(100% - 116.5px);transform-origin:100% 50%;transform:scaleX(0.9);">200 Std.</div>
<div class="t" style="top:36.1px;font-size:2.6px;line-height:4.6px;color:#666;left:189.0px;transform-origin:0 50%;transform:scaleX(0.9);">10.000 €</div>
<div class="t" style="top:40.4px;font-size:2.6px;line-height:4.6px;color:#666;right:calc(100% - 116.5px);transform-origin:100% 50%;transform:scaleX(0.9);">180 Std.</div>
<div class="t" style="top:40.4px;font-size:2.6px;line-height:4.6px;color:#666;left:189.0px;transform-origin:0 50%;transform:scaleX(0.9);">9.000 €</div>
<div class="t" style="top:44.8px;font-size:2.6px;line-height:4.6px;color:#666;right:calc(100% - 116.5px);transform-origin:100% 50%;transform:scaleX(0.9);">160 Std.</div>
<div class="t" style="top:44.8px;font-size:2.6px;line-height:4.6px;color:#666;left:189.0px;transform-origin:0 50%;transform:scaleX(0.9);">8.000 €</div>
<div class="t" style="top:49.1px;font-size:2.6px;line-height:4.6px;color:#666;right:calc(100% - 116.5px);transform-origin:100% 50%;transform:scaleX(0.9);">140 Std.</div>
<div class="t" style="top:49.1px;font-size:2.6px;line-height:4.6px;color:#666;left:189.0px;transform-origin:0 50%;transform:scaleX(0.9);">7.000 €</div>
<div class="t" style="top:53.4px;font-size:2.6px;line-height:4.6px;color:#666;right:calc(100% - 116.5px);transform-origin:100% 50%;transform:scaleX(0.9);">120 Std.</div>
<div class="t" style="top:53.4px;font-size:2.6px;line-height:4.6px;color:#666;left:189.0px;transform-origin:0 50%;transform:scaleX(0.9);">6.000 €</div>
<div class="t" style="top:57.8px;font-size:2.6px;line-height:4.6px;color:#666;right:calc(100% - 116.5px);transform-origin:100% 50%;transform:scaleX(0.9);">100 Std.</div>
<div class="t" style="top:57.8px;font-size:2.6px;line-height:4.6px;color:#666;left:189.0px;transform-origin:0 50%;transform:scaleX(0.9);">5.000 €</div>
<div class="t" style="top:62.1px;font-size:2.6px;line-height:4.6px;color:#666;right:calc(100% - 116.5px);transform-origin:100% 50%;transform:scaleX(0.9);">80 Std.</div>
<div class="t" style="top:62.1px;font-size:2.6px;line-height:4.6px;color:#666;left:189.0px;transform-origin:0 50%;transform:scaleX(0.9);">4.000 €</div>
<div class="t" style="top:66.4px;font-size:2.6px;line-height:4.6px;color:#666;right:calc(100% - 116.5px);transform-origin:100% 50%;transform:scaleX(0.9);">60 Std.</div>
<div class="t" style="top:66.4px;font-size:2.6px;line-height:4.6px;color:#666;left:189.0px;transform-origin:0 50%;transform:scaleX(0.9);">3.000 €</div>
<div class="t" style="top:70.7px;font-size:2.6px;line-height:4.6px;color:#666;right:calc(100% - 116.5px);transform-origin:100% 50%;transform:scaleX(0.9);">40 Std.</div>
<div class="t" style="top:70.7px;font-size:2.6px;line-height:4.6px;color:#666;left:189.0px;transform-origin:0 50%;transform:scaleX(0.9);">2.000 €</div>
<div class="t" style="top:75.1px;font-size:2.6px;line-height:4.6px;color:#666;right:calc(100% - 116.5px);transform-origin:100% 50%;transform:scaleX(0.9);">20 Std.</div>
<div class="t" style="top:75.1px;font-size:2.6px;line-height:4.6px;color:#666;left:189.0px;transform-origin:0 50%;transform:scaleX(0.9);">1.000 €</div>
<div class="t" style="top:79.4px;font-size:2.6px;line-height:4.6px;color:#666;right:calc(100% - 116.5px);transform-origin:100% 50%;transform:scaleX(0.9);">0 Std.</div>
<div class="abs" style="left:142.7px;top:44.2px;width:20.0px;height:36.7px;background:#5b9bd5;"></div>
<div class="t" style="top:83.1px;font-size:2.6px;line-height:4.6px;color:#777;left:152.7px;width:0;display:flex;justify-content:center;transform:scaleX(0.9);">Erstellen einer Vorlage</div>
<div class="abs" style="left:133.0px;top:91.8px;width:6.0px;height:1.2px;background:#5b9bd5;"></div>
<div class="t" style="top:90.4px;font-size:2.6px;line-height:4.6px;color:#777;left:140.0px;transform-origin:0 50%;transform:scaleX(0.9);">Arbeit</div>
<div class="t" style="top:90.4px;font-size:2.6px;line-height:4.6px;color:#777;left:152.0px;transform-origin:0 50%;transform:scaleX(0.9);">— Kostenbudget</div>
<div class="abs" style="left:105.0px;top:99.2px;width:95.0px;height:8.5px;background:#ffc000;"></div>
<div class="t" style="top:101.7px;font-size:3.4px;line-height:5.4px;color:#ffe9a6;font-weight:bold;left:107.5px;transform-origin:0 50%;transform:scaleX(0.9);">Name</div>
<div class="t" style="top:101.7px;font-size:3.4px;line-height:5.4px;color:#ffe9a6;font-weight:bold;left:147.5px;transform-origin:0 50%;transform:scaleX(0.9);">Arbeitsbudget</div>
<div class="t" style="top:101.7px;font-size:3.4px;line-height:5.4px;color:#ffe9a6;font-weight:bold;left:187.5px;transform-origin:0 50%;transform:scaleX(0.9);">Arbeit</div>
<div class="abs" style="left:105.0px;top:107.7px;width:95.0px;height:12.0px;background:#d9d9d9;"></div>
<div class="t" style="top:109.4px;font-size:4px;line-height:6px;color:#333;font-weight:bold;left:107.5px;transform-origin:0 50%;transform:scaleX(0.9);">Budgetm.cabar</div>
<div class="t" style="top:109.4px;font-size:4px;line-height:6px;color:#333;font-weight:bold;left:147.5px;transform-origin:0 50%;transform:scaleX(0.9);">30.000 Std.</div>
<div class="t" style="top:109.4px;font-size:4px;line-height:6px;color:#333;font-weight:bold;left:187.5px;transform-origin:0 50%;transform:scaleX(0.9);">176 S</div>
<div class="t" style="top:122.9px;font-size:3.6px;line-height:5.6px;color:#555;left:120.0px;transform-origin:0 50%;transform:scaleX(0.9);">Ask</div>
<div class="t" style="top:122.9px;font-size:3.6px;line-height:5.6px;color:#555;left:187.5px;transform-origin:0 50%;transform:scaleX(0.9);">72 St</div>
<div class="t" style="top:131.3px;font-size:3.6px;line-height:5.6px;color:#555;left:120.0px;transform-origin:0 50%;transform:scaleX(0.9);">Sonia</div>
<div class="t" style="top:131.3px;font-size:3.6px;line-height:5.6px;color:#555;left:187.5px;transform-origin:0 50%;transform:scaleX(0.9);">72 St</div>
<div class="t" style="top:139.6px;font-size:3.6px;line-height:5.6px;color:#555;left:120.0px;transform-origin:0 50%;transform:scaleX(0.9);">Brian</div>
<div class="t" style="top:139.6px;font-size:3.6px;line-height:5.6px;color:#555;left:187.5px;transform-origin:0 50%;transform:scaleX(0.9);">32 St</div>
<div class="t" style="top:147.9px;font-size:3.6px;line-height:5.6px;color:#555;left:120.0px;transform-origin:0 50%;transform:scaleX(0.9);">Budget :</div>
<div class="t" style="top:147.8px;font-size:3.8px;line-height:5.8px;color:#444;font-weight:bold;left:147.5px;transform-origin:0 50%;transform:scaleX(0.9);">30.000 Std.</div>
</div>
  <div class="lbl" id="l_r1t7" style="left:1359px;top:281px">Erstellen eines Budgets</div>
  <!-- row 2 -->
  <div class="tile" id="r2t1" style="left:49px;top:319px"><div class="t" style="top:3.2px;font-size:3.3px;line-height:5.3px;color:#8c8c8c;left:51.3px;transform-origin:0 50%;transform:scaleX(0.9);">07 Jan '07</div>
<div class="abs" style="left:50.3px;top:4.5px;width:0.6px;height:4.0px;background:#888;"></div>
<div class="t" style="top:3.2px;font-size:3.3px;line-height:5.3px;color:#8c8c8c;left:79.2px;transform-origin:0 50%;transform:scaleX(0.9);">14 Jan '07</div>
<div class="abs" style="left:78.2px;top:4.5px;width:0.6px;height:4.0px;background:#888;"></div>
<div class="t" style="top:3.2px;font-size:3.3px;line-height:5.3px;color:#8c8c8c;left:106.7px;transform-origin:0 50%;transform:scaleX(0.9);">21 Jan '07</div>
<div class="abs" style="left:105.7px;top:4.5px;width:0.6px;height:4.0px;background:#888;"></div>
<div class="t" style="top:3.2px;font-size:3.3px;line-height:5.3px;color:#8c8c8c;left:134.2px;transform-origin:0 50%;transform:scaleX(0.9);">28 Jan '07</div>
<div class="abs" style="left:133.2px;top:4.5px;width:0.6px;height:4.0px;background:#888;"></div>
<div class="t" style="top:3.2px;font-size:3.3px;line-height:5.3px;color:#8c8c8c;left:161.7px;transform-origin:0 50%;transform:scaleX(0.9);">04 Feb '07</div>
<div class="abs" style="left:160.7px;top:4.5px;width:0.6px;height:4.0px;background:#888;"></div>
<div class="t" style="top:3.2px;font-size:3.3px;line-height:5.3px;color:#8c8c8c;left:188.8px;transform-origin:0 50%;transform:scaleX(0.9);">11 Feb</div>
<div class="abs" style="left:187.8px;top:4.5px;width:0.6px;height:4.0px;background:#888;"></div>
<div class="t" style="top:7.7px;font-size:3.3px;line-height:5.3px;color:#8c8c8c;right:calc(100% - 24.8px);transform-origin:100% 50%;transform:scaleX(0.9);">Anfang</div>
<div class="t" style="top:12.4px;font-size:3.3px;line-height:5.3px;color:#8c8c8c;right:calc(100% - 24.8px);transform-origin:100% 50%;transform:scaleX(0.9);">Mon 01.01.07</div>
<div class="abs" style="left:27.3px;top:8.5px;width:180.0px;height:9.5px;background:#e6e9f1;"></div>
<div class="abs" style="left:73.0px;top:18.0px;width:57.0px;height:9.0px;background:#e6e9f1;"></div>
<div class="abs" style="left:27.3px;top:8.0px;width:180.0px;height:19.5px;background:transparent;border:1px solid #3a3a3a;"></div>
<div class="t" style="top:9.2px;font-size:3.3px;line-height:5.3px;color:#555;font-weight:bold;left:30.0px;transform-origin:0 50%;transform:scaleX(0.88);">Entwickeln einer Strategie für</div>
<div class="t" style="top:13.7px;font-size:3.1px;line-height:5.1px;color:#8a8a8a;left:30.0px;transform-origin:0 50%;transform:scaleX(0.9);">Mon 01.01.07 - Fre 12.01.07</div>
<div class="t" style="top:9.2px;font-size:3.3px;line-height:5.3px;color:#555;font-weight:bold;left:85.3px;transform-origin:0 50%;transform:scaleX(0.88);">Entwickeln einer Liste der möglichen Übernahmen</div>
<div class="t" style="top:13.7px;font-size:3.1px;line-height:5.1px;color:#8a8a8a;left:85.3px;transform-origin:0 50%;transform:scaleX(0.9);">Mon 15.01.07 - Fre 09.03.07</div>
<div class="t" style="top:18.5px;font-size:3.3px;line-height:5.3px;color:#555;font-weight:bold;left:73.3px;transform-origin:0 50%;transform:scaleX(0.88);">Definieren der Zielidentifizierungs-</div>
<div class="t" style="top:23.0px;font-size:3.1px;line-height:5.1px;color:#8a8a8a;left:73.3px;transform-origin:0 50%;transform:scaleX(0.9);">Fre 12.01.07 - Fre 26.01.07</div>
<div class="abs" style="left:5.0px;top:52.8px;width:195.0px;height:1.2px;background:#9a9a9a;"></div>
<div class="abs" style="left:5.0px;top:55.4px;width:1.0px;height:96.6px;background:#4a4a4a;"></div>
<div class="abs" style="left:16.2px;top:55.4px;width:1.0px;height:96.6px;background:#4a4a4a;"></div>
<div class="abs" style="left:47.9px;top:55.4px;width:1.0px;height:96.6px;background:#4a4a4a;"></div>
<div class="abs" style="left:98.1px;top:55.4px;width:1.0px;height:96.6px;background:#4a4a4a;"></div>
<div class="abs" style="left:120.1px;top:55.4px;width:1.0px;height:96.6px;background:#4a4a4a;"></div>
<div class="abs" style="left:142.9px;top:55.4px;width:1.0px;height:96.6px;background:#4a4a4a;"></div>
<div class="abs" style="left:164.1px;top:55.4px;width:1.0px;height:96.6px;background:#4a4a4a;"></div>
<div class="abs" style="left:5.5px;top:54.9px;width:159.5px;height:1.0px;background:#4a4a4a;"></div>
<div class="abs" style="left:5.5px;top:64.6px;width:159.5px;height:1.0px;background:#4a4a4a;"></div>
<div class="abs" style="left:5.5px;top:82.0px;width:159.5px;height:1.0px;background:#4a4a4a;"></div>
<div class="abs" style="left:5.5px;top:97.7px;width:159.5px;height:1.0px;background:#4a4a4a;"></div>
<div class="abs" style="left:5.5px;top:129.8px;width:159.5px;height:1.0px;background:#4a4a4a;"></div>
<div class="abs" style="left:5.5px;top:146.1px;width:159.5px;height:1.0px;background:#4a4a4a;"></div>
<div class="abs" style="left:8.8px;top:59.1px;width:4.4px;height:4.4px;border-radius:50%;background:#666"></div>
<div class="t" style="top:60.7px;font-size:3.3px;line-height:5.3px;color:#a0a0a0;left:17.7px;transform-origin:0 50%;transform:scaleX(0.9);">Vorgangsmodus</div>
<div class="t" style="top:60.7px;font-size:3.3px;line-height:5.3px;color:#a0a0a0;left:50.3px;transform-origin:0 50%;transform:scaleX(0.9);">Vorgangsname</div>
<div class="t" style="top:60.7px;font-size:3.3px;line-height:5.3px;color:#a0a0a0;left:100.2px;transform-origin:0 50%;transform:scaleX(0.9);">Dauer</div>
<div class="t" style="top:60.7px;font-size:3.3px;line-height:5.3px;color:#a0a0a0;left:122.2px;transform-origin:0 50%;transform:scaleX(0.9);">Anfang</div>
<div class="t" style="top:60.7px;font-size:3.3px;line-height:5.3px;color:#a0a0a0;left:145.0px;transform-origin:0 50%;transform:scaleX(0.9);">Ende</div>
<div class="t" style="top:61.4px;font-size:3px;line-height:5px;color:#888;left:45.5px;width:0;display:flex;justify-content:center;">▾</div>
<div class="t" style="top:61.4px;font-size:3px;line-height:5px;color:#888;left:95.5px;width:0;display:flex;justify-content:center;">▾</div>
<div class="t" style="top:61.4px;font-size:3px;line-height:5px;color:#888;left:117.5px;width:0;display:flex;justify-content:center;">▾</div>
<div class="t" style="top:61.4px;font-size:3px;line-height:5px;color:#888;left:140.5px;width:0;display:flex;justify-content:center;">▾</div>
<div class="t" style="top:61.4px;font-size:3px;line-height:5px;color:#888;left:161.5px;width:0;display:flex;justify-content:center;">▾</div>
<div class="t" style="top:67.5px;font-size:2.4px;line-height:4.4px;color:#333;left:50.0px;transform-origin:0 50%;">◢</div>
<div class="abs" style="left:18.7px;top:67.8px;width:3.0px;height:1.6px;background:#5b6f94;"></div>
<div class="abs" style="left:20.7px;top:69.1px;width:1.6px;height:1.3px;background:#5b6f94;"></div>
<div class="t" style="top:66.5px;font-size:4.3px;line-height:6.3px;color:#222;font-weight:bold;left:53.0px;transform-origin:0 50%;transform:scaleX(0.88);">Beurteilung der</div>
<div class="t" style="top:71.7px;font-size:4.3px;line-height:6.3px;color:#222;font-weight:bold;left:53.0px;transform-origin:0 50%;transform:scaleX(0.88);">Fusions- und</div>
<div class="t" style="top:76.9px;font-size:4.3px;line-height:6.3px;color:#222;font-weight:bold;left:53.0px;transform-origin:0 50%;transform:scaleX(0.88);">Akquisitionsstrategie</div>
<div class="t" style="top:66.5px;font-size:4.3px;line-height:6.3px;color:#222;font-weight:bold;left:99.2px;transform-origin:0 50%;transform:scaleX(0.88);">68 Tage?</div>
<div class="t" style="top:66.5px;font-size:4.3px;line-height:6.3px;color:#222;font-weight:bold;left:121.6px;transform-origin:0 50%;transform:scaleX(0.88);">Mon</div>
<div class="t" style="top:71.7px;font-size:4.3px;line-height:6.3px;color:#222;font-weight:bold;left:121.6px;transform-origin:0 50%;transform:scaleX(0.88);">01.01.07</div>
<div class="t" style="top:66.5px;font-size:4.3px;line-height:6.3px;color:#222;font-weight:bold;left:144.0px;transform-origin:0 50%;transform:scaleX(0.88);">Mit</div>
<div class="t" style="top:71.7px;font-size:4.3px;line-height:6.3px;color:#222;font-weight:bold;left:144.0px;transform-origin:0 50%;transform:scaleX(0.88);">04.04.07</div>
<div class="abs" style="left:18.7px;top:84.5px;width:3.0px;height:1.6px;background:#5b6f94;"></div>
<div class="abs" style="left:20.7px;top:85.8px;width:1.6px;height:1.3px;background:#5b6f94;"></div>
<div class="t" style="top:83.4px;font-size:4px;line-height:6px;color:#222;font-weight:bold;left:57.4px;transform-origin:0 50%;transform:scaleX(0.88);">Entwickeln einer</div>
<div class="t" style="top:88.3px;font-size:4px;line-height:6px;color:#222;font-weight:bold;left:57.4px;transform-origin:0 50%;transform:scaleX(0.88);">Strategie für Fusionen</div>
<div class="t" style="top:93.2px;font-size:4px;line-height:6px;color:#222;font-weight:bold;left:57.4px;transform-origin:0 50%;transform:scaleX(0.88);">&amp; Übernahmen</div>
<div class="t" style="top:83.4px;font-size:4px;line-height:6px;color:#222;font-weight:bold;left:99.2px;transform-origin:0 50%;transform:scaleX(0.88);">10 Tage?</div>
<div class="t" style="top:83.4px;font-size:4px;line-height:6px;color:#222;font-weight:bold;left:121.6px;transform-origin:0 50%;transform:scaleX(0.88);">Mon</div>
<div class="t" style="top:88.3px;font-size:4px;line-height:6px;color:#222;font-weight:bold;left:121.6px;transform-origin:0 50%;transform:scaleX(0.88);">01.01.07</div>
<div class="t" style="top:83.4px;font-size:4px;line-height:6px;color:#222;font-weight:bold;left:144.0px;transform-origin:0 50%;transform:scaleX(0.88);">Fre 12.01.07</div>
<div class="abs" style="left:18.7px;top:100.6px;width:3.0px;height:1.6px;background:#5b6f94;"></div>
<div class="abs" style="left:20.7px;top:101.9px;width:1.6px;height:1.3px;background:#5b6f94;"></div>
<div class="t" style="top:99.5px;font-size:4px;line-height:6px;color:#222;font-weight:bold;left:57.4px;transform-origin:0 50%;transform:scaleX(0.88);">Definieren der</div>
<div class="t" style="top:104.4px;font-size:4px;line-height:6px;color:#222;font-weight:bold;left:57.4px;transform-origin:0 50%;transform:scaleX(0.88);">Zielidentifizierungs-</div>
<div class="t" style="top:109.4px;font-size:4px;line-height:6px;color:#222;font-weight:bold;left:57.4px;transform-origin:0 50%;transform:scaleX(0.88);">und</div>
<div class="t" style="top:114.4px;font-size:4px;line-height:6px;color:#222;font-weight:bold;left:57.4px;transform-origin:0 50%;transform:scaleX(0.88);">Überprüfungskriterien</div>
<div class="t" style="top:119.3px;font-size:4px;line-height:6px;color:#222;font-weight:bold;left:57.4px;transform-origin:0 50%;transform:scaleX(0.88);">für Fusionen &amp;</div>
<div class="t" style="top:124.2px;font-size:4px;line-height:6px;color:#222;font-weight:bold;left:57.4px;transform-origin:0 50%;transform:scaleX(0.88);">Übernahmen</div>
<div class="t" style="top:99.5px;font-size:4px;line-height:6px;color:#222;font-weight:bold;left:99.2px;transform-origin:0 50%;transform:scaleX(0.88);">11 Tage?</div>
<div class="t" style="top:99.5px;font-size:4px;line-height:6px;color:#222;font-weight:bold;left:121.6px;transform-origin:0 50%;transform:scaleX(0.88);">Fre 12.01.07</div>
<div class="t" style="top:99.5px;font-size:4px;line-height:6px;color:#222;font-weight:bold;left:144.0px;transform-origin:0 50%;transform:scaleX(0.88);">Fre 26.01.07</div>
<div class="abs" style="left:18.7px;top:132.2px;width:3.0px;height:1.6px;background:#5b6f94;"></div>
<div class="abs" style="left:20.7px;top:133.5px;width:1.6px;height:1.3px;background:#5b6f94;"></div>
<div class="t" style="top:131.1px;font-size:4px;line-height:6px;color:#222;font-weight:bold;left:57.4px;transform-origin:0 50%;transform:scaleX(0.88);">Entwickeln einer Liste</div>
<div class="t" style="top:136.1px;font-size:4px;line-height:6px;color:#222;font-weight:bold;left:57.4px;transform-origin:0 50%;transform:scaleX(0.88);">der möglichen</div>
<div class="t" style="top:141.1px;font-size:4px;line-height:6px;color:#222;font-weight:bold;left:57.4px;transform-origin:0 50%;transform:scaleX(0.88);">Übernahmen</div>
<div class="t" style="top:131.1px;font-size:4px;line-height:6px;color:#222;font-weight:bold;left:99.2px;transform-origin:0 50%;transform:scaleX(0.88);">48 Tage?</div>
<div class="t" style="top:131.1px;font-size:4px;line-height:6px;color:#222;font-weight:bold;left:121.6px;transform-origin:0 50%;transform:scaleX(0.88);">Mon</div>
<div class="t" style="top:136.1px;font-size:4px;line-height:6px;color:#222;font-weight:bold;left:121.6px;transform-origin:0 50%;transform:scaleX(0.88);">15.01.07</div>
<div class="t" style="top:131.1px;font-size:4px;line-height:6px;color:#222;font-weight:bold;left:144.0px;transform-origin:0 50%;transform:scaleX(0.88);">Fre 09.03.07</div>
<div class="abs" style="left:18.7px;top:148.3px;width:3.0px;height:1.6px;background:#5b6f94;"></div>
<div class="abs" style="left:20.7px;top:149.6px;width:1.6px;height:1.3px;background:#5b6f94;"></div>
<div class="t" style="top:147.2px;font-size:4px;line-height:6px;color:#222;font-weight:bold;left:57.4px;transform-origin:0 50%;transform:scaleX(0.88);">Ausführen einer</div>
<div class="t" style="top:147.2px;font-size:4px;line-height:6px;color:#222;font-weight:bold;left:99.2px;transform-origin:0 50%;transform:scaleX(0.88);">11 Tage?</div>
<div class="t" style="top:147.2px;font-size:4px;line-height:6px;color:#222;font-weight:bold;left:121.6px;transform-origin:0 50%;transform:scaleX(0.88);">Mon</div>
<div class="t" style="top:147.2px;font-size:4px;line-height:6px;color:#222;font-weight:bold;left:144.0px;transform-origin:0 50%;transform:scaleX(0.88);">Mon</div>
<div class="abs" style="left:7.5px;top:67.0px;width:3px;height:3px;border-radius:50%;border:.6px solid #aaa"></div>
<div class="abs" style="left:7.5px;top:100.0px;width:3px;height:3px;border-radius:50%;border:.6px solid #aaa"></div>
<div class="abs" style="left:166.4px;top:55.4px;width:1.2px;height:96.6px;background:#4a4a4a;"></div>
<div class="abs" style="left:166.4px;top:55.0px;width:33.6px;height:1.0px;background:#4a4a4a;"></div>
<div class="t" style="top:56.9px;font-size:3px;line-height:5px;color:#999;left:168.0px;transform-origin:0 50%;transform:scaleX(0.9);">24 Dez '06</div>
<div class="t" style="top:56.9px;font-size:3px;line-height:5px;color:#999;left:185.5px;transform-origin:0 50%;transform:scaleX(0.9);">31 Dez '06</div>
<div class="t" style="top:61.4px;font-size:3px;line-height:5px;color:#999;left:170.0px;width:0;display:flex;justify-content:center;">S</div>
<div class="t" style="top:61.4px;font-size:3px;line-height:5px;color:#999;left:180.0px;width:0;display:flex;justify-content:center;">S</div>
<div class="t" style="top:61.4px;font-size:3px;line-height:5px;color:#999;left:189.0px;width:0;display:flex;justify-content:center;">M</div>
<div class="t" style="top:61.4px;font-size:3px;line-height:5px;color:#999;left:197.0px;width:0;display:flex;justify-content:center;">D</div>
<div class="abs" style="left:166.4px;top:65.0px;width:33.6px;height:0.8px;background:#bbb;"></div>
<div class="abs" style="left:185.3px;top:66.0px;width:0;height:86px;border-left:1px dashed #777"></div>
<div class="abs" style="left:185.3px;top:66.6px;width:14.7px;height:0.8px;background:#999;"></div>
<div class="abs" style="left:185.3px;top:84.5px;width:14.7px;height:0.8px;background:#999;"></div>
</div>
  <div class="lbl" id="l_r2t1" style="left:39px;top:481px">Beurteilung von Fusionen...</div>
  <div class="tile" id="r2t2" style="left:269px;top:319px"><div class="t" style="top:3.2px;font-size:3.3px;line-height:5.3px;color:#8c8c8c;left:29.0px;transform-origin:0 50%;transform:scaleX(0.9);">Januar</div>
<div class="abs" style="left:28.5px;top:4.5px;width:0.6px;height:4.0px;background:#888;"></div>
<div class="t" style="top:8.2px;font-size:3.3px;line-height:5.3px;color:#8c8c8c;right:calc(100% - 26.5px);transform-origin:100% 50%;transform:scaleX(0.9);">Anfang</div>
<div class="t" style="top:12.7px;font-size:3.3px;line-height:5.3px;color:#8c8c8c;right:calc(100% - 26.5px);transform-origin:100% 50%;transform:scaleX(0.9);">Mon 01.01.07</div>
<div class="abs" style="left:28.5px;top:8.0px;width:80.0px;height:30.5px;background:#e9edf5;border:1px solid #3a3a3a;"></div>
<div class="t" style="top:9.4px;font-size:3.4px;line-height:5.4px;color:#555;font-weight:bold;left:31.5px;transform-origin:0 50%;transform:scaleX(0.88);">Phase 1 - strategische Planung</div>
<div class="t" style="top:14.1px;font-size:3.1px;line-height:5.1px;color:#8a8a8a;left:31.5px;transform-origin:0 50%;transform:scaleX(0.9);">Mon 01.01.07 - Mit 31.01.07</div>
<div class="t" style="top:18.9px;font-size:3.3px;line-height:5.3px;color:#555;font-weight:bold;left:31.5px;transform-origin:0 50%;transform:scaleX(0.88);">Se</div>
<div class="t" style="top:18.9px;font-size:3.3px;line-height:5.3px;color:#555;font-weight:bold;left:37.5px;transform-origin:0 50%;transform:scaleX(0.88);">Definieren der</div>
<div class="t" style="top:18.9px;font-size:3.3px;line-height:5.3px;color:#555;font-weight:bold;left:68.6px;transform-origin:0 50%;transform:scaleX(0.88);">Bewert</div>
<div class="t" style="top:24.1px;font-size:3.1px;line-height:5.1px;color:#8a8a8a;left:31.5px;transform-origin:0 50%;transform:scaleX(0.9);">M</div>
<div class="t" style="top:24.1px;font-size:3.1px;line-height:5.1px;color:#8a8a8a;left:37.5px;transform-origin:0 50%;transform:scaleX(0.9);">Don 04.01.07 - Mit</div>
<div class="t" style="top:24.1px;font-size:3.1px;line-height:5.1px;color:#8a8a8a;left:68.6px;transform-origin:0 50%;transform:scaleX(0.9);">Don</div>
<div class="t" style="top:28.7px;font-size:3.3px;line-height:5.3px;color:#555;font-weight:bold;left:71.7px;transform-origin:0 50%;transform:scaleX(0.88);">Bewerte</div>
<div class="t" style="top:33.6px;font-size:3.1px;line-height:5.1px;color:#8a8a8a;left:71.7px;transform-origin:0 50%;transform:scaleX(0.9);">Fre 16.0</div>
<div class="t" style="top:45.3px;font-size:3.1px;line-height:5.1px;color:#8c8c8c;left:77.5px;transform-origin:0 50%;transform:scaleX(0.9);">Spä</div>
<div class="t" style="top:55.3px;font-size:3.1px;line-height:5.1px;color:#8c8c8c;left:77.5px;transform-origin:0 50%;transform:scaleX(0.9);">Le</div>
<div class="abs" style="left:6.0px;top:68.8px;width:104.0px;height:1.2px;background:#9a9a9a;"></div>
<div class="abs" style="left:6.0px;top:71.3px;width:1.0px;height:80.7px;background:#4a4a4a;"></div>
<div class="abs" style="left:17.2px;top:71.3px;width:1.0px;height:80.7px;background:#4a4a4a;"></div>
<div class="abs" style="left:49.8px;top:71.3px;width:1.0px;height:80.7px;background:#4a4a4a;"></div>
<div class="abs" style="left:6.5px;top:70.8px;width:103.5px;height:1.0px;background:#4a4a4a;"></div>
<div class="abs" style="left:6.5px;top:80.7px;width:103.5px;height:1.0px;background:#4a4a4a;"></div>
<div class="abs" style="left:6.5px;top:87.5px;width:103.5px;height:1.0px;background:#4a4a4a;"></div>
<div class="abs" style="left:6.5px;top:99.1px;width:103.5px;height:1.0px;background:#4a4a4a;"></div>
<div class="abs" style="left:6.5px;top:104.8px;width:103.5px;height:1.0px;background:#4a4a4a;"></div>
<div class="abs" style="left:6.5px;top:116.0px;width:103.5px;height:1.0px;background:#4a4a4a;"></div>
<div class="abs" style="left:6.5px;top:127.8px;width:103.5px;height:1.0px;background:#4a4a4a;"></div>
<div class="abs" style="left:6.5px;top:139.0px;width:103.5px;height:1.0px;background:#4a4a4a;"></div>
<div class="abs" style="left:9.8px;top:74.3px;width:4.4px;height:4.4px;border-radius:50%;background:#5a6c90"></div>
<div class="t" style="top:76.2px;font-size:3.3px;line-height:5.3px;color:#a0a0a0;left:19.0px;transform-origin:0 50%;transform:scaleX(0.9);">Vorgangsmodus</div>
<div class="t" style="top:76.2px;font-size:3.3px;line-height:5.3px;color:#a0a0a0;left:52.0px;transform-origin:0 50%;transform:scaleX(0.9);">Vorgangsname</div>
<div class="t" style="top:76.9px;font-size:3px;line-height:5px;color:#888;left:47.0px;width:0;display:flex;justify-content:center;">▾</div>
<div class="t" style="top:84.0px;font-size:2.4px;line-height:4.4px;color:#333;left:51.7px;transform-origin:0 50%;">◢</div>
<div class="abs" style="left:19.5px;top:84.3px;width:3.0px;height:1.6px;background:#5b6f94;"></div>
<div class="abs" style="left:21.5px;top:85.6px;width:1.6px;height:1.3px;background:#5b6f94;"></div>
<div class="t" style="top:83.2px;font-size:4px;line-height:6px;color:#222;font-weight:bold;left:54.8px;transform-origin:0 50%;transform:scaleX(0.88);">Neues Unternehmen</div>
<div class="t" style="top:90.3px;font-size:2.4px;line-height:4.4px;color:#333;left:55.8px;transform-origin:0 50%;">◢</div>
<div class="abs" style="left:19.5px;top:90.6px;width:3.0px;height:1.6px;background:#5b6f94;"></div>
<div class="abs" style="left:21.5px;top:91.9px;width:1.6px;height:1.3px;background:#5b6f94;"></div>
<div class="t" style="top:89.5px;font-size:4px;line-height:6px;color:#222;font-weight:bold;left:59.0px;transform-origin:0 50%;transform:scaleX(0.88);">Phase 1 - strategische</div>
<div class="t" style="top:94.4px;font-size:4px;line-height:6px;color:#222;font-weight:bold;left:59.0px;transform-origin:0 50%;transform:scaleX(0.88);">Planung</div>
<div class="abs" style="left:19.5px;top:101.6px;width:3.0px;height:1.6px;background:#5b6f94;"></div>
<div class="abs" style="left:21.5px;top:102.9px;width:1.6px;height:1.3px;background:#5b6f94;"></div>
<div class="t" style="top:100.5px;font-size:4px;line-height:6px;color:#222;font-weight:bold;left:64.0px;transform-origin:0 50%;transform:scaleX(0.88);">Selbsteinschätzung</div>
<div class="abs" style="left:19.5px;top:107.7px;width:3.0px;height:1.6px;background:#5b6f94;"></div>
<div class="abs" style="left:21.5px;top:109.0px;width:1.6px;height:1.3px;background:#5b6f94;"></div>
<div class="t" style="top:106.6px;font-size:4px;line-height:6px;color:#222;font-weight:bold;left:64.0px;transform-origin:0 50%;transform:scaleX(0.88);">Definieren der</div>
<div class="t" style="top:111.5px;font-size:4px;line-height:6px;color:#222;font-weight:bold;left:64.0px;transform-origin:0 50%;transform:scaleX(0.88);">Unternehmensziele</div>
<div class="abs" style="left:19.5px;top:119.2px;width:3.0px;height:1.6px;background:#5b6f94;"></div>
<div class="abs" style="left:21.5px;top:120.5px;width:1.6px;height:1.3px;background:#5b6f94;"></div>
<div class="t" style="top:118.1px;font-size:4px;line-height:6px;color:#222;font-weight:bold;left:64.0px;transform-origin:0 50%;transform:scaleX(0.88);">Bewerten des</div>
<div class="t" style="top:123.0px;font-size:4px;line-height:6px;color:#222;font-weight:bold;left:64.0px;transform-origin:0 50%;transform:scaleX(0.88);">Unternehmens</div>
<div class="abs" style="left:19.5px;top:130.4px;width:3.0px;height:1.6px;background:#5b6f94;"></div>
<div class="abs" style="left:21.5px;top:131.7px;width:1.6px;height:1.3px;background:#5b6f94;"></div>
<div class="t" style="top:129.3px;font-size:4px;line-height:6px;color:#222;font-weight:bold;left:64.0px;transform-origin:0 50%;transform:scaleX(0.88);">Bewerten der</div>
<div class="t" style="top:134.2px;font-size:4px;line-height:6px;color:#222;font-weight:bold;left:64.0px;transform-origin:0 50%;transform:scaleX(0.88);">Risiken und Chancen</div>
<div class="abs" style="left:19.5px;top:141.8px;width:3.0px;height:1.6px;background:#5b6f94;"></div>
<div class="abs" style="left:21.5px;top:143.1px;width:1.6px;height:1.3px;background:#5b6f94;"></div>
<div class="t" style="top:140.7px;font-size:4px;line-height:6px;color:#777;left:64.0px;transform-origin:0 50%;transform:scaleX(0.88);">Überprüfen</div>
<div class="t" style="top:145.6px;font-size:4px;line-height:6px;color:#777;left:64.0px;transform-origin:0 50%;transform:scaleX(0.88);">des strategischen</div>
</div>
  <div class="lbl" id="l_r2t2" style="left:259px;top:481px">Geschäftsplan für Unterne...</div>
  <div class="abs" style="left:40px;top:508px;width:1682px;height:1px;background:#d8d8d8"></div>
  <!-- search -->
  <div class="abs" style="left:40px;top:548px;width:500px;height:32px;background:#fff;border:1px solid #8a8a8a"></div>
  <div class="t" id="srch" style="left:47px;top:556px;font-size:14.5px;line-height:18px;color:#666">Nach Onlinevorlagen suchen</div>
  <div class="t" id="emp" style="left:41px;top:590px;font-size:12.5px;line-height:16px;color:#262626;-webkit-text-stroke:0.3px #262626">Empfohlene Suchbegriffe:</div>
  <div class="t" id="proj" style="left:199px;top:590px;font-size:12.5px;line-height:16px;color:#6a6a6a;-webkit-text-stroke:.2px #6a6a6a">Projekte</div>
  <div class="t" id="hoch" style="left:263px;top:590px;font-size:12.5px;line-height:16px;color:#6a6a6a;-webkit-text-stroke:.2px #6a6a6a">Hochschultools</div>
  <!-- row 3 -->
  <div class="tile" id="r3t1" style="left:49px;top:636px"><div class="abs" style="left:13.4px;top:-1.0px;width:0.8px;height:22.0px;background:#aaa;"></div>
<div class="t" style="top:-0.9px;font-size:2.6px;line-height:4.6px;color:#8c8c8c;left:1.0px;transform-origin:0 50%;transform:scaleX(0.9);">1.04.06.12</div>
<div class="t" style="top:1.8px;font-size:3px;line-height:5px;color:#8c8c8c;left:71.4px;transform-origin:0 50%;transform:scaleX(0.9);">03 Jul 12</div>
<div class="abs" style="left:70.4px;top:3.0px;width:0.6px;height:3.3px;background:#999;"></div>
<div class="t" style="top:1.8px;font-size:3px;line-height:5px;color:#8c8c8c;left:122.9px;transform-origin:0 50%;transform:scaleX(0.9);">03 Jul 12</div>
<div class="abs" style="left:121.9px;top:3.0px;width:0.6px;height:3.3px;background:#999;"></div>
<div class="t" style="top:1.8px;font-size:3px;line-height:5px;color:#8c8c8c;left:173.4px;transform-origin:0 50%;transform:scaleX(0.9);">03 Jul 12</div>
<div class="abs" style="left:172.4px;top:3.0px;width:0.6px;height:3.3px;background:#999;"></div>
<div class="t" style="top:6.3px;font-size:3px;line-height:5px;color:#8c8c8c;right:calc(100% - 26.7px);transform-origin:100% 50%;transform:scaleX(0.9);">Anfang</div>
<div class="t" style="top:10.9px;font-size:3px;line-height:5px;color:#8c8c8c;right:calc(100% - 26.7px);transform-origin:100% 50%;transform:scaleX(0.9);">Die 26.06.12</div>
<div class="abs" style="left:28.6px;top:6.3px;width:175.0px;height:8.7px;background:#eceff6;border:.7px solid #b5b5b5;"></div>
<div class="abs" style="left:82.0px;top:6.8px;width:33.0px;height:7.7px;background:#d9deeb;"></div>
<div class="abs" style="left:132.0px;top:6.8px;width:33.0px;height:7.7px;background:#d9deeb;"></div>
<div class="abs" style="left:182.0px;top:6.8px;width:20.0px;height:7.7px;background:#d9deeb;"></div>
<div class="t" style="top:7.1px;font-size:3.1px;line-height:5.1px;color:#666;font-weight:bold;left:31.0px;transform-origin:0 50%;transform:scaleX(0.88);">Pla   Vorbereiten der</div>
<div class="t" style="top:11.4px;font-size:3px;line-height:5px;color:#8a8a8a;left:31.0px;transform-origin:0 50%;transform:scaleX(0.9);">Son   Die 26.06.12 - Fre</div>
<div class="t" style="top:7.1px;font-size:3.1px;line-height:5.1px;color:#666;font-weight:bold;left:82.5px;transform-origin:0 50%;transform:scaleX(0.88);">SharePoint Server 2013</div>
<div class="t" style="top:11.4px;font-size:3px;line-height:5px;color:#8a8a8a;left:82.5px;transform-origin:0 50%;transform:scaleX(0.9);">Mon 07.07.12 - Fre</div>
<div class="t" style="top:7.1px;font-size:3.1px;line-height:5.1px;color:#666;font-weight:bold;left:133.0px;transform-origin:0 50%;transform:scaleX(0.88);">Project Server 2013</div>
<div class="t" style="top:11.4px;font-size:3px;line-height:5px;color:#8a8a8a;left:133.0px;transform-origin:0 50%;transform:scaleX(0.9);">Mon 07.07.12 - Fre</div>
<div class="t" style="top:7.1px;font-size:3.1px;line-height:5.1px;color:#666;font-weight:bold;left:183.0px;transform-origin:0 50%;transform:scaleX(0.88);">Erst Project</div>
<div class="t" style="top:11.4px;font-size:3px;line-height:5px;color:#8a8a8a;left:183.0px;transform-origin:0 50%;transform:scaleX(0.9);">Mon 16.07</div>
<div class="abs" style="left:9.5px;top:20.0px;width:9.4px;height:8.0px;background:#e4e4e4;"></div>
<div class="abs" style="left:12.0px;top:22.2px;width:4.0px;height:4.0px;border-radius:50%;background:#3f5a8a"></div>
<div class="t" style="top:23.8px;font-size:3px;line-height:5px;color:#aaa;left:21.8px;transform-origin:0 50%;transform:scaleX(0.9);">Vorgar ▾</div>
<div class="t" style="top:23.8px;font-size:3px;line-height:5px;color:#aaa;left:35.8px;transform-origin:0 50%;transform:scaleX(0.9);">Vorgangsname</div>
<div class="t" style="top:23.8px;font-size:3px;line-height:5px;color:#aaa;left:181.0px;transform-origin:0 50%;transform:scaleX(0.9);">▾ Dauer</div>
<div class="abs" style="left:0.0px;top:28.5px;width:200.0px;height:0.8px;background:#d5d5d5;"></div>
<div class="abs" style="left:8.6px;top:29.0px;width:192.0px;height:5.2px;background:transparent;border:.8px solid #9a9a9a;"></div>
<div class="abs" style="left:9.0px;top:20.0px;width:0.7px;height:133.0px;background:#e3e3e3;"></div>
<div class="abs" style="left:19.0px;top:20.0px;width:0.7px;height:133.0px;background:#e9e9e9;"></div>
<div class="t" style="top:29.7px;font-size:2.8px;line-height:4.8px;color:#aaa;right:calc(100% - 5.5px);transform-origin:100% 50%;transform:scaleX(0.9);">1</div>
<div class="abs" style="left:21.8px;top:30.2px;width:3.0px;height:1.6px;background:#6878a0;"></div>
<div class="abs" style="left:23.8px;top:31.5px;width:1.6px;height:1.3px;background:#6878a0;"></div>
<div class="t" style="top:29.3px;font-size:3.7px;line-height:5.7px;color:#6a6a6a;left:38.3px;transform-origin:0 50%;transform:scaleX(0.966);">Plan für die Project Server 2013-Bereitstellung</div>
<div class="t" style="top:29.3px;font-size:3.7px;line-height:5.7px;color:#6a6a6a;left:187.0px;transform-origin:0 50%;transform:scaleX(0.86);">1 Tag?</div>
<div class="t" style="top:35.3px;font-size:2.8px;line-height:4.8px;color:#aaa;right:calc(100% - 5.5px);transform-origin:100% 50%;transform:scaleX(0.9);">2</div>
<div class="abs" style="left:21.8px;top:35.8px;width:3.0px;height:1.6px;background:#6878a0;"></div>
<div class="abs" style="left:23.8px;top:37.1px;width:1.6px;height:1.3px;background:#6878a0;"></div>
<div class="abs" style="left:10.7px;top:35.5px;width:2.600px;height:2.600px;border-radius:50%;border:.6px solid #a9a98a"></div>
<div class="t" style="top:35.6px;font-size:2.2px;line-height:4.2px;color:#333;left:35.4px;transform-origin:0 50%;">◢</div>
<div class="t" style="top:34.8px;font-size:3.7px;line-height:5.7px;color:#333;font-weight:bold;left:38.0px;transform-origin:0 50%;transform:scaleX(0.84);">Vorbereiten der Bereitstellung</div>
<div class="t" style="top:34.8px;font-size:3.7px;line-height:5.7px;color:#333;font-weight:bold;left:187.0px;transform-origin:0 50%;transform:scaleX(0.86);">4 Tage?</div>
<div class="t" style="top:41.2px;font-size:2.8px;line-height:4.8px;color:#aaa;right:calc(100% - 5.5px);transform-origin:100% 50%;transform:scaleX(0.9);">3</div>
<div class="abs" style="left:21.8px;top:41.7px;width:3.0px;height:1.6px;background:#6878a0;"></div>
<div class="abs" style="left:23.8px;top:43.0px;width:1.6px;height:1.3px;background:#6878a0;"></div>
<div class="t" style="top:40.8px;font-size:3.7px;line-height:5.7px;color:#6a6a6a;left:42.2px;transform-origin:0 50%;transform:scaleX(0.971);">Benutzer und Gruppen im Active Directory-Dienst erstellen</div>
<div class="t" style="top:40.8px;font-size:3.7px;line-height:5.7px;color:#6a6a6a;left:187.0px;transform-origin:0 50%;transform:scaleX(0.86);">1 Tag?</div>
<div class="t" style="top:46.8px;font-size:2.8px;line-height:4.8px;color:#aaa;right:calc(100% - 5.5px);transform-origin:100% 50%;transform:scaleX(0.9);">4</div>
<div class="abs" style="left:21.8px;top:47.3px;width:3.0px;height:1.6px;background:#6878a0;"></div>
<div class="abs" style="left:23.8px;top:48.6px;width:1.6px;height:1.3px;background:#6878a0;"></div>
<div class="abs" style="left:10.7px;top:47.0px;width:2.600px;height:2.600px;border-radius:50%;border:.6px solid #a9a98a"></div>
<div class="t" style="top:47.1px;font-size:2.2px;line-height:4.2px;color:#333;left:39.3px;transform-origin:0 50%;">◢</div>
<div class="t" style="top:46.3px;font-size:3.7px;line-height:5.7px;color:#333;font-weight:bold;left:41.9px;transform-origin:0 50%;transform:scaleX(0.84);">SQL Server und Analysis Services konfigurieren</div>
<div class="t" style="top:46.3px;font-size:3.7px;line-height:5.7px;color:#333;font-weight:bold;left:187.0px;transform-origin:0 50%;transform:scaleX(0.86);">4 Tage?</div>
<div class="t" style="top:52.5px;font-size:2.8px;line-height:4.8px;color:#aaa;right:calc(100% - 5.5px);transform-origin:100% 50%;transform:scaleX(0.9);">5</div>
<div class="abs" style="left:21.8px;top:53.0px;width:3.0px;height:1.6px;background:#6878a0;"></div>
<div class="abs" style="left:23.8px;top:54.3px;width:1.6px;height:1.3px;background:#6878a0;"></div>
<div class="t" style="top:52.0px;font-size:3.7px;line-height:5.7px;color:#6a6a6a;left:46.1px;transform-origin:0 50%;transform:scaleX(0.987);">SQL Server-Netzwerkeinstellungen konfigurieren</div>
<div class="t" style="top:52.0px;font-size:3.7px;line-height:5.7px;color:#6a6a6a;left:187.0px;transform-origin:0 50%;transform:scaleX(0.86);">1 Tag?</div>
<div class="t" style="top:58.1px;font-size:2.8px;line-height:4.8px;color:#aaa;right:calc(100% - 5.5px);transform-origin:100% 50%;transform:scaleX(0.9);">6</div>
<div class="abs" style="left:21.8px;top:58.6px;width:3.0px;height:1.6px;background:#6878a0;"></div>
<div class="abs" style="left:23.8px;top:59.9px;width:1.6px;height:1.3px;background:#6878a0;"></div>
<div class="t" style="top:57.6px;font-size:3.7px;line-height:5.7px;color:#6a6a6a;left:46.1px;transform-origin:0 50%;transform:scaleX(0.951);">Analysis Services zum Erstellen von Project Server-OLAP-Cubes konfigurieren</div>
<div class="t" style="top:57.6px;font-size:3.7px;line-height:5.7px;color:#6a6a6a;left:187.0px;transform-origin:0 50%;transform:scaleX(0.86);">1 Tag?</div>
<div class="t" style="top:63.7px;font-size:2.8px;line-height:4.8px;color:#aaa;right:calc(100% - 5.5px);transform-origin:100% 50%;transform:scaleX(0.9);">7</div>
<div class="abs" style="left:21.8px;top:64.2px;width:3.0px;height:1.6px;background:#6878a0;"></div>
<div class="abs" style="left:23.8px;top:65.5px;width:1.6px;height:1.3px;background:#6878a0;"></div>
<div class="t" style="top:63.3px;font-size:3.7px;line-height:5.7px;color:#6a6a6a;left:46.1px;transform-origin:0 50%;transform:scaleX(0.97);">Zusätzliche TempDB-Dateien erstellen</div>
<div class="t" style="top:63.3px;font-size:3.7px;line-height:5.7px;color:#6a6a6a;left:187.0px;transform-origin:0 50%;transform:scaleX(0.86);">1 Tag?</div>
<div class="t" style="top:69.4px;font-size:2.8px;line-height:4.8px;color:#aaa;right:calc(100% - 5.5px);transform-origin:100% 50%;transform:scaleX(0.9);">8</div>
<div class="abs" style="left:21.8px;top:69.9px;width:3.0px;height:1.6px;background:#6878a0;"></div>
<div class="abs" style="left:23.8px;top:71.2px;width:1.6px;height:1.3px;background:#6878a0;"></div>
<div class="abs" style="left:10.7px;top:69.6px;width:2.600px;height:2.600px;border-radius:50%;border:.6px solid #a9a98a"></div>
<div class="t" style="top:69.7px;font-size:2.2px;line-height:4.2px;color:#333;left:35.4px;transform-origin:0 50%;">◢</div>
<div class="t" style="top:68.9px;font-size:3.7px;line-height:5.7px;color:#333;font-weight:bold;left:38.0px;transform-origin:0 50%;transform:scaleX(0.84);">SharePoint Server 2013 installieren</div>
<div class="t" style="top:68.9px;font-size:3.7px;line-height:5.7px;color:#333;font-weight:bold;left:187.0px;transform-origin:0 50%;transform:scaleX(0.86);">5 Tage?</div>
<div class="t" style="top:79.7px;font-size:2.8px;line-height:4.8px;color:#aaa;right:calc(100% - 5.5px);transform-origin:100% 50%;transform:scaleX(0.9);">9</div>
<div class="abs" style="left:21.8px;top:80.2px;width:3.0px;height:1.6px;background:#6878a0;"></div>
<div class="abs" style="left:23.8px;top:81.5px;width:1.6px;height:1.3px;background:#6878a0;"></div>
<div class="t" style="top:79.3px;font-size:3.7px;line-height:5.7px;color:#6a6a6a;left:42.2px;transform-origin:0 50%;transform:scaleX(0.967);">Farmkonten vorbereiten</div>
<div class="t" style="top:79.3px;font-size:3.7px;line-height:5.7px;color:#6a6a6a;left:187.0px;transform-origin:0 50%;transform:scaleX(0.86);">1 Tag?</div>
<div class="t" style="top:85.3px;font-size:2.8px;line-height:4.8px;color:#aaa;right:calc(100% - 5.5px);transform-origin:100% 50%;transform:scaleX(0.9);">10</div>
<div class="abs" style="left:21.8px;top:85.8px;width:3.0px;height:1.6px;background:#6878a0;"></div>
<div class="abs" style="left:23.8px;top:87.1px;width:1.6px;height:1.3px;background:#6878a0;"></div>
<div class="t" style="top:84.8px;font-size:3.7px;line-height:5.7px;color:#6a6a6a;left:42.2px;transform-origin:0 50%;transform:scaleX(0.964);">SharePoint 2013 auf den Farmservern installieren</div>
<div class="t" style="top:84.8px;font-size:3.7px;line-height:5.7px;color:#6a6a6a;left:187.0px;transform-origin:0 50%;transform:scaleX(0.86);">2 Tag?</div>
<div class="t" style="top:90.9px;font-size:2.8px;line-height:4.8px;color:#aaa;right:calc(100% - 5.5px);transform-origin:100% 50%;transform:scaleX(0.9);">11</div>
<div class="abs" style="left:21.8px;top:91.4px;width:3.0px;height:1.6px;background:#6878a0;"></div>
<div class="abs" style="left:23.8px;top:92.7px;width:1.6px;height:1.3px;background:#6878a0;"></div>
<div class="t" style="top:90.4px;font-size:3.7px;line-height:5.7px;color:#6a6a6a;left:42.2px;transform-origin:0 50%;transform:scaleX(0.986);">Farm erstellen und konfigurieren</div>
<div class="t" style="top:90.4px;font-size:3.7px;line-height:5.7px;color:#6a6a6a;left:187.0px;transform-origin:0 50%;transform:scaleX(0.86);">1 Tag?</div>
<div class="t" style="top:96.6px;font-size:2.8px;line-height:4.8px;color:#aaa;right:calc(100% - 5.5px);transform-origin:100% 50%;transform:scaleX(0.9);">12</div>
<div class="abs" style="left:21.8px;top:97.1px;width:3.0px;height:1.6px;background:#6878a0;"></div>
<div class="abs" style="left:23.8px;top:98.4px;width:1.6px;height:1.3px;background:#6878a0;"></div>
<div class="t" style="top:96.2px;font-size:3.7px;line-height:5.7px;color:#6a6a6a;left:42.2px;transform-origin:0 50%;transform:scaleX(0.961);">Der Farm Webserver hinzufügen</div>
<div class="t" style="top:96.2px;font-size:3.7px;line-height:5.7px;color:#6a6a6a;left:187.0px;transform-origin:0 50%;transform:scaleX(0.86);">1 Tag?</div>
<div class="t" style="top:102.4px;font-size:2.8px;line-height:4.8px;color:#aaa;right:calc(100% - 5.5px);transform-origin:100% 50%;transform:scaleX(0.9);">13</div>
<div class="abs" style="left:21.8px;top:102.9px;width:3.0px;height:1.6px;background:#6878a0;"></div>
<div class="abs" style="left:23.8px;top:104.2px;width:1.6px;height:1.3px;background:#6878a0;"></div>
<div class="abs" style="left:10.7px;top:102.6px;width:2.600px;height:2.600px;border-radius:50%;border:.6px solid #a9a98a"></div>
<div class="t" style="top:101.9px;font-size:3.7px;line-height:5.7px;color:#6a6a6a;left:42.2px;transform-origin:0 50%;transform:scaleX(0.98);">Verwaltungsaufgaben ausführen</div>
<div class="t" style="top:101.9px;font-size:3.7px;line-height:5.7px;color:#6a6a6a;left:187.0px;transform-origin:0 50%;transform:scaleX(0.86);">1 Tag?</div>
<div class="t" style="top:108.1px;font-size:2.8px;line-height:4.8px;color:#aaa;right:calc(100% - 5.5px);transform-origin:100% 50%;transform:scaleX(0.9);">14</div>
<div class="abs" style="left:21.8px;top:108.6px;width:3.0px;height:1.6px;background:#6878a0;"></div>
<div class="abs" style="left:23.8px;top:109.9px;width:1.6px;height:1.3px;background:#6878a0;"></div>
<div class="abs" style="left:10.7px;top:108.3px;width:2.600px;height:2.600px;border-radius:50%;border:.6px solid #a9a98a"></div>
<div class="t" style="top:108.4px;font-size:2.2px;line-height:4.2px;color:#333;left:35.4px;transform-origin:0 50%;">◢</div>
<div class="t" style="top:107.7px;font-size:3.7px;line-height:5.7px;color:#333;font-weight:bold;left:38.0px;transform-origin:0 50%;transform:scaleX(0.84);">Project Server 2013 installieren und konfigurieren</div>
<div class="t" style="top:107.7px;font-size:3.7px;line-height:5.7px;color:#333;font-weight:bold;left:187.0px;transform-origin:0 50%;transform:scaleX(0.86);">5 Tage?</div>
<div class="t" style="top:118.4px;font-size:2.8px;line-height:4.8px;color:#aaa;right:calc(100% - 5.5px);transform-origin:100% 50%;transform:scaleX(0.9);">15</div>
<div class="abs" style="left:21.8px;top:118.9px;width:3.0px;height:1.6px;background:#6878a0;"></div>
<div class="abs" style="left:23.8px;top:120.2px;width:1.6px;height:1.3px;background:#6878a0;"></div>
<div class="t" style="top:117.9px;font-size:3.7px;line-height:5.7px;color:#6a6a6a;left:42.2px;transform-origin:0 50%;transform:scaleX(0.963);">Project Server 2013 installieren</div>
<div class="t" style="top:117.9px;font-size:3.7px;line-height:5.7px;color:#6a6a6a;left:187.0px;transform-origin:0 50%;transform:scaleX(0.86);">1 Tag?</div>
<div class="t" style="top:124.0px;font-size:2.8px;line-height:4.8px;color:#aaa;right:calc(100% - 5.5px);transform-origin:100% 50%;transform:scaleX(0.9);">16</div>
<div class="abs" style="left:21.8px;top:124.5px;width:3.0px;height:1.6px;background:#6878a0;"></div>
<div class="abs" style="left:23.8px;top:125.8px;width:1.6px;height:1.3px;background:#6878a0;"></div>
<div class="t" style="top:123.5px;font-size:3.7px;line-height:5.7px;color:#6a6a6a;left:42.2px;transform-origin:0 50%;transform:scaleX(0.977);">Den Konfigurations-Assistenten für SharePoint-Produkte und -Technologien ausführen</div>
<div class="t" style="top:123.5px;font-size:3.7px;line-height:5.7px;color:#6a6a6a;left:187.0px;transform-origin:0 50%;transform:scaleX(0.86);">1 Tag?</div>
<div class="t" style="top:129.8px;font-size:2.8px;line-height:4.8px;color:#aaa;right:calc(100% - 5.5px);transform-origin:100% 50%;transform:scaleX(0.9);">17</div>
<div class="abs" style="left:21.8px;top:130.3px;width:3.0px;height:1.6px;background:#6878a0;"></div>
<div class="abs" style="left:23.8px;top:131.6px;width:1.6px;height:1.3px;background:#6878a0;"></div>
<div class="t" style="top:130.1px;font-size:2.2px;line-height:4.2px;color:#333;left:39.3px;transform-origin:0 50%;">◢</div>
<div class="t" style="top:129.3px;font-size:3.7px;line-height:5.7px;color:#333;font-weight:bold;left:41.9px;transform-origin:0 50%;transform:scaleX(0.84);">Dienste konfigurieren</div>
<div class="t" style="top:129.3px;font-size:3.7px;line-height:5.7px;color:#333;font-weight:bold;left:187.0px;transform-origin:0 50%;transform:scaleX(0.86);">3 Tage?</div>
<div class="t" style="top:135.5px;font-size:2.8px;line-height:4.8px;color:#aaa;right:calc(100% - 5.5px);transform-origin:100% 50%;transform:scaleX(0.9);">18</div>
<div class="abs" style="left:21.8px;top:136.0px;width:3.0px;height:1.6px;background:#6878a0;"></div>
<div class="abs" style="left:23.8px;top:137.3px;width:1.6px;height:1.3px;background:#6878a0;"></div>
<div class="t" style="top:135.0px;font-size:3.7px;line-height:5.7px;color:#6a6a6a;left:46.1px;transform-origin:0 50%;transform:scaleX(0.973);">Den Project Server-Anwendungsdienst starten</div>
<div class="t" style="top:135.0px;font-size:3.7px;line-height:5.7px;color:#6a6a6a;left:187.0px;transform-origin:0 50%;transform:scaleX(0.86);">1 Tag?</div>
<div class="t" style="top:141.1px;font-size:2.8px;line-height:4.8px;color:#aaa;right:calc(100% - 5.5px);transform-origin:100% 50%;transform:scaleX(0.9);">19</div>
<div class="abs" style="left:21.8px;top:141.6px;width:3.0px;height:1.6px;background:#6878a0;"></div>
<div class="abs" style="left:23.8px;top:142.9px;width:1.6px;height:1.3px;background:#6878a0;"></div>
<div class="t" style="top:140.7px;font-size:3.7px;line-height:5.7px;color:#6a6a6a;left:46.1px;transform-origin:0 50%;transform:scaleX(1.003);">Ein verwaltetes Konto registrieren</div>
<div class="t" style="top:140.7px;font-size:3.7px;line-height:5.7px;color:#6a6a6a;left:187.0px;transform-origin:0 50%;transform:scaleX(0.86);">1 Tag?</div>
<div class="t" style="top:146.7px;font-size:2.8px;line-height:4.8px;color:#aaa;right:calc(100% - 5.5px);transform-origin:100% 50%;transform:scaleX(0.9);">20</div>
<div class="abs" style="left:21.8px;top:147.2px;width:3.0px;height:1.6px;background:#6878a0;"></div>
<div class="abs" style="left:23.8px;top:148.5px;width:1.6px;height:1.3px;background:#6878a0;"></div>
<div class="t" style="top:146.3px;font-size:3.7px;line-height:5.7px;color:#6a6a6a;left:46.1px;transform-origin:0 50%;transform:scaleX(0.978);">Eine Project Server-Dienstanwendung erstellen</div>
<div class="t" style="top:146.3px;font-size:3.7px;line-height:5.7px;color:#6a6a6a;left:187.0px;transform-origin:0 50%;transform:scaleX(0.86);">1 Tag?</div>
</div>
  <div class="lbl" id="l_r3t1" style="left:39px;top:799px">Installieren von Project Ser...</div>
  <div class="tile" id="r3t2" style="left:269px;top:636px"><div class="t" style="top:0.4px;font-size:3px;line-height:5px;color:#8c8c8c;left:49.7px;transform-origin:0 50%;transform:scaleX(0.9);">29 Jul 12</div>
<div class="abs" style="left:48.7px;top:1.5px;width:0.6px;height:2.9px;background:#999;"></div>
<div class="t" style="top:4.7px;font-size:3px;line-height:5px;color:#8c8c8c;right:calc(100% - 24.8px);transform-origin:100% 50%;transform:scaleX(0.9);">Anfang</div>
<div class="t" style="top:9.2px;font-size:3px;line-height:5px;color:#8c8c8c;right:calc(100% - 24.8px);transform-origin:100% 50%;transform:scaleX(0.9);">Son 11.07.12</div>
<div class="abs" style="left:26.7px;top:4.4px;width:90.0px;height:9.7px;background:#e3e7f1;border:.7px solid #9a9a9a;"></div>
<div class="t" style="top:6.0px;font-size:3.2px;line-height:5.2px;color:#555;font-weight:bold;left:29.2px;transform-origin:0 50%;transform:scaleX(0.88);">Plan für das Upgrade auf Project</div>
<div class="t" style="top:10.6px;font-size:3px;line-height:5px;color:#7b86a8;left:29.2px;transform-origin:0 50%;transform:scaleX(0.9);text-decoration:underline;">Mon 23.07.12 - Mit 08.07.12</div>
<div class="abs" style="left:0.0px;top:17.5px;width:110.0px;height:0.8px;background:#e0e0e0;"></div>
<div class="abs" style="left:9.8px;top:19.0px;width:7.8px;height:7.7px;background:#e4e4e4;"></div>
<div class="abs" style="left:11.3px;top:21.0px;width:4.0px;height:4.0px;border-radius:50%;background:#3f5a8a"></div>
<div class="t" style="top:22.4px;font-size:3px;line-height:5px;color:#aaa;left:20.5px;transform-origin:0 50%;transform:scaleX(0.9);">Vorgar ▾</div>
<div class="t" style="top:22.4px;font-size:3px;line-height:5px;color:#aaa;left:34.7px;transform-origin:0 50%;transform:scaleX(0.9);">Vorgangsname</div>
<div class="abs" style="left:9.0px;top:19.0px;width:0.7px;height:134.0px;background:#e3e3e3;"></div>
<div class="abs" style="left:18.5px;top:19.0px;width:0.7px;height:134.0px;background:#e3e3e3;"></div>
<div class="abs" style="left:8.8px;top:26.7px;width:9.4px;height:10.7px;background:#fff;border:.8px solid #8a8a8a;"></div>
<div class="t" style="top:28.2px;font-size:2.8px;line-height:4.8px;color:#aaa;right:calc(100% - 5.5px);transform-origin:100% 50%;transform:scaleX(0.9);">1</div>
<div class="t" style="top:28.5px;font-size:2.2px;line-height:4.2px;color:#333;left:35.0px;transform-origin:0 50%;">◢</div>
<div class="t" style="top:27.8px;font-size:3.7px;line-height:5.7px;color:#333;font-weight:bold;left:37.4px;transform-origin:0 50%;transform:scaleX(0.86);">Plan für das Upgrade auf Project</div>
<div class="t" style="top:32.5px;font-size:3.7px;line-height:5.7px;color:#333;font-weight:bold;left:37.4px;transform-origin:0 50%;transform:scaleX(0.86);">2013</div>
<div class="t" style="top:38.5px;font-size:2.8px;line-height:4.8px;color:#aaa;right:calc(100% - 5.5px);transform-origin:100% 50%;transform:scaleX(0.9);">2</div>
<div class="abs" style="left:21.5px;top:39.0px;width:3.0px;height:1.6px;background:#6878a0;"></div>
<div class="abs" style="left:23.5px;top:40.3px;width:1.6px;height:1.3px;background:#6878a0;"></div>
<div class="t" style="top:38.0px;font-size:3.7px;line-height:5.7px;color:#6a6a6a;left:41.9px;transform-origin:0 50%;transform:scaleX(0.86);">Überprüfen der Systemanforderungen</div>
<div class="t" style="top:42.8px;font-size:3.7px;line-height:5.7px;color:#6a6a6a;left:41.9px;transform-origin:0 50%;transform:scaleX(0.86);">für das Upgrade</div>
<div class="t" style="top:49.0px;font-size:2.8px;line-height:4.8px;color:#aaa;right:calc(100% - 5.5px);transform-origin:100% 50%;transform:scaleX(0.9);">3</div>
<div class="abs" style="left:21.5px;top:49.5px;width:3.0px;height:1.6px;background:#6878a0;"></div>
<div class="abs" style="left:23.5px;top:50.8px;width:1.6px;height:1.3px;background:#6878a0;"></div>
<div class="t" style="top:48.5px;font-size:3.7px;line-height:5.7px;color:#6a6a6a;left:41.9px;transform-origin:0 50%;transform:scaleX(0.86);">Planen der Course</div>
<div class="t" style="top:54.4px;font-size:2.8px;line-height:4.8px;color:#aaa;right:calc(100% - 5.5px);transform-origin:100% 50%;transform:scaleX(0.9);">4</div>
<div class="abs" style="left:21.5px;top:54.9px;width:3.0px;height:1.6px;background:#6878a0;"></div>
<div class="abs" style="left:23.5px;top:56.2px;width:1.6px;height:1.3px;background:#6878a0;"></div>
<div class="t" style="top:53.9px;font-size:3.7px;line-height:5.7px;color:#6a6a6a;left:41.9px;transform-origin:0 50%;transform:scaleX(0.86);">Sammeln von Informationen</div>
<div class="t" style="top:58.7px;font-size:3.7px;line-height:5.7px;color:#6a6a6a;left:41.9px;transform-origin:0 50%;transform:scaleX(0.86);">Project Server 2013 Upgrade</div>
<div class="t" style="top:64.9px;font-size:2.8px;line-height:4.8px;color:#aaa;right:calc(100% - 5.5px);transform-origin:100% 50%;transform:scaleX(0.9);">5</div>
<div class="abs" style="left:21.5px;top:65.4px;width:3.0px;height:1.6px;background:#6878a0;"></div>
<div class="abs" style="left:23.5px;top:66.7px;width:1.6px;height:1.3px;background:#6878a0;"></div>
<div class="t" style="top:64.4px;font-size:3.7px;line-height:5.7px;color:#6a6a6a;left:41.9px;transform-origin:0 50%;transform:scaleX(0.86);">Planung der Upgradeabläufe</div>
<div class="t" style="top:70.3px;font-size:2.8px;line-height:4.8px;color:#aaa;right:calc(100% - 5.5px);transform-origin:100% 50%;transform:scaleX(0.9);">6</div>
<div class="abs" style="left:21.5px;top:70.8px;width:3.0px;height:1.6px;background:#6878a0;"></div>
<div class="abs" style="left:23.5px;top:72.1px;width:1.6px;height:1.3px;background:#6878a0;"></div>
<div class="t" style="top:69.8px;font-size:3.7px;line-height:5.7px;color:#6a6a6a;left:41.9px;transform-origin:0 50%;transform:scaleX(0.86);">Erstellen eines Kommunikationsplans</div>
<div class="t" style="top:74.6px;font-size:3.7px;line-height:5.7px;color:#6a6a6a;left:41.9px;transform-origin:0 50%;transform:scaleX(0.86);">für das Upgrade</div>
<div class="t" style="top:80.8px;font-size:2.8px;line-height:4.8px;color:#aaa;right:calc(100% - 5.5px);transform-origin:100% 50%;transform:scaleX(0.9);">7</div>
<div class="abs" style="left:21.5px;top:81.3px;width:3.0px;height:1.6px;background:#6878a0;"></div>
<div class="abs" style="left:23.5px;top:82.6px;width:1.6px;height:1.3px;background:#6878a0;"></div>
<div class="abs" style="left:12.0px;top:81.0px;width:2.600px;height:2.600px;border-radius:50%;border:.6px solid #a9a98a"></div>
<div class="t" style="top:81.1px;font-size:2.2px;line-height:4.2px;color:#333;left:35.0px;transform-origin:0 50%;">◢</div>
<div class="t" style="top:80.3px;font-size:3.7px;line-height:5.7px;color:#333;font-weight:bold;left:37.4px;transform-origin:0 50%;transform:scaleX(0.86);">Vorbereiten der Umgebung</div>
<div class="t" style="top:85.1px;font-size:3.7px;line-height:5.7px;color:#333;font-weight:bold;left:37.4px;transform-origin:0 50%;transform:scaleX(0.86);">Upgrade</div>
<div class="t" style="top:91.1px;font-size:2.8px;line-height:4.8px;color:#aaa;right:calc(100% - 5.5px);transform-origin:100% 50%;transform:scaleX(0.9);">8</div>
<div class="abs" style="left:21.5px;top:91.6px;width:3.0px;height:1.6px;background:#6878a0;"></div>
<div class="abs" style="left:23.5px;top:92.9px;width:1.6px;height:1.3px;background:#6878a0;"></div>
<div class="t" style="top:90.7px;font-size:3.7px;line-height:5.7px;color:#6a6a6a;left:41.9px;transform-origin:0 50%;transform:scaleX(0.86);">Bereitstellen der Project</div>
<div class="t" style="top:95.4px;font-size:3.7px;line-height:5.7px;color:#6a6a6a;left:41.9px;transform-origin:0 50%;transform:scaleX(0.86);">2013-Datumgebung</div>
<div class="t" style="top:101.4px;font-size:2.8px;line-height:4.8px;color:#aaa;right:calc(100% - 5.5px);transform-origin:100% 50%;transform:scaleX(0.9);">9</div>
<div class="abs" style="left:21.5px;top:101.9px;width:3.0px;height:1.6px;background:#6878a0;"></div>
<div class="abs" style="left:23.5px;top:103.2px;width:1.6px;height:1.3px;background:#6878a0;"></div>
<div class="t" style="top:100.9px;font-size:3.7px;line-height:5.7px;color:#6a6a6a;left:41.9px;transform-origin:0 50%;transform:scaleX(0.86);">Vorbereiten der Benutzer</div>
<div class="t" style="top:105.7px;font-size:3.7px;line-height:5.7px;color:#6a6a6a;left:41.9px;transform-origin:0 50%;transform:scaleX(0.86);">Powershell-Umgebung</div>
<div class="t" style="top:111.5px;font-size:2.8px;line-height:4.8px;color:#aaa;right:calc(100% - 5.5px);transform-origin:100% 50%;transform:scaleX(0.9);">10</div>
<div class="abs" style="left:21.5px;top:112.0px;width:3.0px;height:1.6px;background:#6878a0;"></div>
<div class="abs" style="left:23.5px;top:113.3px;width:1.6px;height:1.3px;background:#6878a0;"></div>
<div class="t" style="top:111.0px;font-size:3.7px;line-height:5.7px;color:#6a6a6a;left:41.9px;transform-origin:0 50%;transform:scaleX(0.86);">Deaktivieren des</div>
<div class="t" style="top:115.8px;font-size:3.7px;line-height:5.7px;color:#6a6a6a;left:41.9px;transform-origin:0 50%;transform:scaleX(0.86);">Abwärtskompatibilitätsmodus</div>
<div class="t" style="top:120.5px;font-size:3.7px;line-height:5.7px;color:#6a6a6a;left:41.9px;transform-origin:0 50%;transform:scaleX(0.86);">Project Server 2010-Umgebung</div>
<div class="t" style="top:126.5px;font-size:2.8px;line-height:4.8px;color:#aaa;right:calc(100% - 5.5px);transform-origin:100% 50%;transform:scaleX(0.9);">11</div>
<div class="abs" style="left:21.5px;top:127.0px;width:3.0px;height:1.6px;background:#6878a0;"></div>
<div class="abs" style="left:23.5px;top:128.3px;width:1.6px;height:1.3px;background:#6878a0;"></div>
<div class="t" style="top:126.0px;font-size:3.7px;line-height:5.7px;color:#6a6a6a;left:41.9px;transform-origin:0 50%;transform:scaleX(0.86);">Überprüfen der Schreibrechte</div>
<div class="t" style="top:130.8px;font-size:3.7px;line-height:5.7px;color:#6a6a6a;left:41.9px;transform-origin:0 50%;transform:scaleX(0.86);">Server 2010-Daten auf Project</div>
<div class="t" style="top:135.5px;font-size:3.7px;line-height:5.7px;color:#6a6a6a;left:41.9px;transform-origin:0 50%;transform:scaleX(0.86);">zu sowas Fehlen keine Upgrade</div>
<div class="t" style="top:140.3px;font-size:3.7px;line-height:5.7px;color:#6a6a6a;left:41.9px;transform-origin:0 50%;transform:scaleX(0.86);">können</div>
<div class="t" style="top:146.9px;font-size:2.8px;line-height:4.8px;color:#aaa;right:calc(100% - 5.5px);transform-origin:100% 50%;transform:scaleX(0.9);">12</div>
<div class="abs" style="left:21.5px;top:147.4px;width:3.0px;height:1.6px;background:#6878a0;"></div>
<div class="abs" style="left:23.5px;top:148.7px;width:1.6px;height:1.3px;background:#6878a0;"></div>
<div class="abs" style="left:12.0px;top:147.1px;width:2.600px;height:2.600px;border-radius:50%;border:.6px solid #a9a98a"></div>
<div class="t" style="top:146.4px;font-size:3.7px;line-height:5.7px;color:#6a6a6a;left:37.4px;transform-origin:0 50%;transform:scaleX(0.86);">Erstellen von Sicherungskopien der</div>
<div class="abs" style="left:21.5px;top:28.7px;width:3.0px;height:1.6px;background:#6878a0;"></div>
<div class="abs" style="left:23.5px;top:30.0px;width:1.6px;height:1.3px;background:#6878a0;"></div>
</div>
  <div class="lbl" id="l_r3t2" style="left:259px;top:799px">Upgrade auf Project Server...</div>
  <div class="tile" id="r3t3" style="left:489px;top:636px"><div class="abs" style="left:5.8px;top:133.0px;width:1.0px;height:20.0px;background:#4a4a4a;"></div>
<div class="abs" style="left:17.0px;top:133.0px;width:1.0px;height:20.0px;background:#4a4a4a;"></div>
<div class="abs" style="left:50.2px;top:133.0px;width:1.0px;height:20.0px;background:#4a4a4a;"></div>
<div class="abs" style="left:110.8px;top:133.0px;width:1.0px;height:20.0px;background:#4a4a4a;"></div>
<div class="abs" style="left:133.8px;top:133.0px;width:1.0px;height:20.0px;background:#4a4a4a;"></div>
<div class="abs" style="left:157.0px;top:133.0px;width:1.0px;height:20.0px;background:#4a4a4a;"></div>
<div class="abs" style="left:179.0px;top:133.0px;width:1.0px;height:20.0px;background:#4a4a4a;"></div>
<div class="abs" style="left:182.0px;top:133.0px;width:1.0px;height:20.0px;background:#4a4a4a;"></div>
<div class="t" style="top:142.9px;font-size:4px;line-height:6px;color:#222;font-weight:bold;left:60.0px;transform-origin:0 50%;transform:scaleX(0.88);">Vorbereiten der Materialien</div>
<div class="t" style="top:147.7px;font-size:4px;line-height:6px;color:#222;font-weight:bold;left:60.0px;transform-origin:0 50%;transform:scaleX(0.88);">zum Hauptabschluss</div>
<div class="t" style="top:142.9px;font-size:4px;line-height:6px;color:#222;font-weight:bold;left:113.0px;transform-origin:0 50%;transform:scaleX(0.88);">2,67 Tage?</div>
<div class="t" style="top:142.9px;font-size:4px;line-height:6px;color:#222;font-weight:bold;left:135.0px;transform-origin:0 50%;transform:scaleX(0.88);">Don</div>
<div class="t" style="top:147.7px;font-size:4px;line-height:6px;color:#222;font-weight:bold;left:135.0px;transform-origin:0 50%;transform:scaleX(0.88);">22.06.07</div>
<div class="t" style="top:142.9px;font-size:4px;line-height:6px;color:#222;font-weight:bold;left:159.0px;transform-origin:0 50%;transform:scaleX(0.86);">Mon 25.06.07</div>
</div>
  <div class="lbl" id="l_r3t3" style="left:479px;top:799px">Vorbereitung des Jahresber...</div>
  <div class="tile" id="r3t4" style="left:709px;top:636px"><div class="abs" style="left:5.2px;top:133.0px;width:1.0px;height:20.0px;background:#4a4a4a;"></div>
<div class="abs" style="left:36.5px;top:133.0px;width:1.0px;height:20.0px;background:#4a4a4a;"></div>
<div class="abs" style="left:99.0px;top:133.0px;width:1.0px;height:20.0px;background:#4a4a4a;"></div>
<div class="abs" style="left:120.0px;top:133.0px;width:1.0px;height:20.0px;background:#4a4a4a;"></div>
<div class="abs" style="left:140.8px;top:133.0px;width:1.0px;height:20.0px;background:#4a4a4a;"></div>
<div class="abs" style="left:162.0px;top:133.0px;width:1.0px;height:20.0px;background:#4a4a4a;"></div>
<div class="abs" style="left:164.5px;top:133.0px;width:1.0px;height:20.0px;background:#4a4a4a;"></div>
<div class="abs" style="left:5.8px;top:145.5px;width:159.2px;height:1.0px;background:#4a4a4a;"></div>
<div class="abs" style="left:170.5px;top:133px;width:0;height:20px;border-left:1px dashed #777"></div>
<div class="abs" style="left:7.5px;top:148.0px;width:3.0px;height:1.6px;background:#5b6f94;"></div>
<div class="abs" style="left:9.5px;top:149.3px;width:1.6px;height:1.3px;background:#5b6f94;"></div>
<div class="t" style="top:148.2px;font-size:4px;line-height:6px;color:#222;font-weight:bold;left:45.0px;transform-origin:0 50%;transform:scaleX(0.88);">Entwickeln der Kampagne</div>
<div class="t" style="top:148.2px;font-size:4px;line-height:6px;color:#222;font-weight:bold;left:101.0px;transform-origin:0 50%;transform:scaleX(0.88);">14 Tage?</div>
<div class="t" style="top:148.2px;font-size:4px;line-height:6px;color:#222;font-weight:bold;left:121.5px;transform-origin:0 50%;transform:scaleX(0.88);">Don</div>
<div class="t" style="top:148.2px;font-size:4px;line-height:6px;color:#222;font-weight:bold;left:142.5px;transform-origin:0 50%;transform:scaleX(0.84);">Die 03.07.07</div>
</div>
  <div class="lbl" id="l_r3t4" style="left:699px;top:799px">Plan für eine Marketingka...</div>
  <div class="tile" id="r3t5" style="left:929px;top:636px"><div class="abs" style="left:4.0px;top:133.0px;width:1.0px;height:20.0px;background:#4a4a4a;"></div>
<div class="abs" style="left:120.0px;top:133.0px;width:1.0px;height:20.0px;background:#4a4a4a;"></div>
<div class="abs" style="left:4.5px;top:148.3px;width:115.5px;height:0.8px;background:#888;"></div>
<div class="abs" style="left:4.5px;top:151.0px;width:115.5px;height:0.8px;background:#888;"></div>
</div>
  <div class="lbl" id="l_r3t5" style="left:919px;top:799px">SOX-Kompatibilität und S...</div>
  <div class="tile" id="r3t6" style="left:1149px;top:636px"><div class="t" style="top:1.6px;font-size:3.2px;line-height:5.2px;color:#8c8c8c;left:134.0px;transform-origin:0 50%;transform:scaleX(0.9);">28 Jan '07</div>
<div class="abs" style="left:133.0px;top:3.0px;width:0.6px;height:3.6px;background:#888;"></div>
<div class="t" style="top:1.6px;font-size:3.2px;line-height:5.2px;color:#8c8c8c;left:160.0px;transform-origin:0 50%;transform:scaleX(0.9);">04 Feb '07</div>
<div class="abs" style="left:159.0px;top:3.0px;width:0.6px;height:3.6px;background:#888;"></div>
<div class="t" style="top:1.6px;font-size:3.2px;line-height:5.2px;color:#8c8c8c;left:188.6px;transform-origin:0 50%;transform:scaleX(0.9);">11 Feb</div>
<div class="abs" style="left:187.6px;top:3.0px;width:0.6px;height:3.6px;background:#888;"></div>
<div class="abs" style="left:6.0px;top:7.0px;width:200.0px;height:17.7px;background:#dfe6f3;"></div>
<div class="abs" style="left:6.0px;top:24.7px;width:200.0px;height:9.0px;background:#f0f3f9;"></div>
<div class="abs" style="left:6.0px;top:6.0px;width:194.0px;height:1.3px;background:#2e2e2e;"></div>
<div class="abs" style="left:6.0px;top:35.4px;width:194.0px;height:1.3px;background:#2e2e2e;"></div>
<div class="t" style="top:7.7px;font-size:3.2px;line-height:5.2px;color:#555;font-weight:bold;left:139.0px;transform-origin:0 50%;transform:scaleX(0.88);">nehmen</div>
<div class="abs" style="left:5.8px;top:36.0px;width:1.0px;height:117.0px;background:#4a4a4a;"></div>
<div class="abs" style="left:15.8px;top:36.0px;width:1.0px;height:117.0px;background:#4a4a4a;"></div>
<div class="abs" style="left:47.8px;top:36.0px;width:1.0px;height:117.0px;background:#4a4a4a;"></div>
<div class="abs" style="left:105.0px;top:36.0px;width:1.0px;height:117.0px;background:#4a4a4a;"></div>
<div class="abs" style="left:128.2px;top:36.0px;width:1.0px;height:117.0px;background:#4a4a4a;"></div>
<div class="abs" style="left:149.8px;top:36.0px;width:1.0px;height:117.0px;background:#4a4a4a;"></div>
<div class="abs" style="left:172.0px;top:36.0px;width:1.0px;height:117.0px;background:#4a4a4a;"></div>
<div class="abs" style="left:6.2px;top:35.5px;width:166.2px;height:1.0px;background:#4a4a4a;"></div>
<div class="abs" style="left:6.2px;top:46.9px;width:166.2px;height:1.0px;background:#4a4a4a;"></div>
<div class="abs" style="left:6.2px;top:59.2px;width:166.2px;height:1.0px;background:#4a4a4a;"></div>
<div class="abs" style="left:6.2px;top:73.1px;width:166.2px;height:1.0px;background:#4a4a4a;"></div>
<div class="abs" style="left:6.2px;top:80.5px;width:166.2px;height:1.0px;background:#4a4a4a;"></div>
<div class="abs" style="left:6.2px;top:91.7px;width:166.2px;height:1.0px;background:#4a4a4a;"></div>
<div class="abs" style="left:6.2px;top:98.1px;width:166.2px;height:1.0px;background:#4a4a4a;"></div>
<div class="abs" style="left:6.2px;top:112.5px;width:166.2px;height:1.0px;background:#4a4a4a;"></div>
<div class="abs" style="left:6.2px;top:125.8px;width:166.2px;height:1.0px;background:#4a4a4a;"></div>
<div class="abs" style="left:6.2px;top:136.1px;width:166.2px;height:1.0px;background:#4a4a4a;"></div>
<div class="abs" style="left:6.2px;top:147.2px;width:166.2px;height:1.0px;background:#4a4a4a;"></div>
<div class="abs" style="left:174.4px;top:36.0px;width:1.2px;height:117.0px;background:#4a4a4a;"></div>
<div class="t" style="top:43.7px;font-size:3px;line-height:5px;color:#888;left:147.5px;width:0;display:flex;justify-content:center;">▾</div>
<div class="t" style="top:43.2px;font-size:3.3px;line-height:5.3px;color:#a0a0a0;left:151.7px;transform-origin:0 50%;transform:scaleX(0.9);">Ende</div>
<div class="t" style="top:43.7px;font-size:3px;line-height:5px;color:#888;left:169.7px;width:0;display:flex;justify-content:center;">▾</div>
<div class="t" style="top:49.1px;font-size:4.1px;line-height:6.1px;color:#222;font-weight:bold;right:calc(100% - 149.3px);transform-origin:100% 50%;transform:scaleX(0.86);">Mon</div>
<div class="t" style="top:54.3px;font-size:4.1px;line-height:6.1px;color:#222;font-weight:bold;right:calc(100% - 149.3px);transform-origin:100% 50%;transform:scaleX(0.86);">01.01.07</div>
<div class="t" style="top:49.1px;font-size:4.1px;line-height:6.1px;color:#222;font-weight:bold;left:151.7px;transform-origin:0 50%;transform:scaleX(0.86);">Don</div>
<div class="t" style="top:54.3px;font-size:4.1px;line-height:6.1px;color:#222;font-weight:bold;left:151.7px;transform-origin:0 50%;transform:scaleX(0.86);">05.04.07</div>
<div class="t" style="top:60.2px;font-size:4.1px;line-height:6.1px;color:#8a8a8a;right:calc(100% - 149.3px);transform-origin:100% 50%;transform:scaleX(0.86);">Mon</div>
<div class="t" style="top:65.5px;font-size:4.1px;line-height:6.1px;color:#8a8a8a;right:calc(100% - 149.3px);transform-origin:100% 50%;transform:scaleX(0.86);">01.01.07</div>
<div class="t" style="top:60.2px;font-size:4.1px;line-height:6.1px;color:#8a8a8a;left:151.7px;transform-origin:0 50%;transform:scaleX(0.86);">Mon</div>
<div class="t" style="top:65.5px;font-size:4.1px;line-height:6.1px;color:#8a8a8a;left:151.7px;transform-origin:0 50%;transform:scaleX(0.86);">01.01.07</div>
<div class="t" style="top:76.5px;font-size:4.1px;line-height:6.1px;color:#222;font-weight:bold;right:calc(100% - 149.3px);transform-origin:100% 50%;transform:scaleX(0.86);">Mon 01.01.0</div>
<div class="t" style="top:76.5px;font-size:4.1px;line-height:6.1px;color:#222;font-weight:bold;left:151.7px;transform-origin:0 50%;transform:scaleX(0.86);">Fre 05.01.07</div>
<div class="t" style="top:87.8px;font-size:4.1px;line-height:6.1px;color:#222;font-weight:bold;right:calc(100% - 149.3px);transform-origin:100% 50%;transform:scaleX(0.86);">07</div>
<div class="t" style="top:82.6px;font-size:4.1px;line-height:6.1px;color:#222;font-weight:bold;left:151.7px;transform-origin:0 50%;transform:scaleX(0.86);">Fre 05.01.07</div>
<div class="t" style="top:93.6px;font-size:4.1px;line-height:6.1px;color:#222;font-weight:bold;right:calc(100% - 149.3px);transform-origin:100% 50%;transform:scaleX(0.86);">Mon 08.01.0</div>
<div class="t" style="top:93.6px;font-size:4.1px;line-height:6.1px;color:#222;font-weight:bold;left:151.7px;transform-origin:0 50%;transform:scaleX(0.86);">Fre 12.01.07</div>
<div class="t" style="top:105.0px;font-size:4.1px;line-height:6.1px;color:#222;font-weight:bold;right:calc(100% - 149.3px);transform-origin:100% 50%;transform:scaleX(0.86);">07</div>
<div class="t" style="top:99.7px;font-size:4.1px;line-height:6.1px;color:#222;font-weight:bold;left:151.7px;transform-origin:0 50%;transform:scaleX(0.86);">Fre 23.02.07</div>
<div class="t" style="top:115.8px;font-size:4.1px;line-height:6.1px;color:#222;font-weight:bold;right:calc(100% - 149.3px);transform-origin:100% 50%;transform:scaleX(0.86);">Mon 15.01.07</div>
<div class="t" style="top:115.8px;font-size:4.1px;line-height:6.1px;color:#222;font-weight:bold;left:151.7px;transform-origin:0 50%;transform:scaleX(0.86);">Die 16.01.07</div>
<div class="t" style="top:126.8px;font-size:4.1px;line-height:6.1px;color:#222;font-weight:bold;right:calc(100% - 149.3px);transform-origin:100% 50%;transform:scaleX(0.86);">Mit 17.01.07</div>
<div class="t" style="top:126.8px;font-size:4.1px;line-height:6.1px;color:#222;font-weight:bold;left:151.7px;transform-origin:0 50%;transform:scaleX(0.86);">Mon</div>
<div class="t" style="top:132.1px;font-size:4.1px;line-height:6.1px;color:#222;font-weight:bold;left:151.7px;transform-origin:0 50%;transform:scaleX(0.86);">19.03.07</div>
<div class="t" style="top:137.8px;font-size:4.1px;line-height:6.1px;color:#222;font-weight:bold;right:calc(100% - 149.3px);transform-origin:100% 50%;transform:scaleX(0.86);">Die 20.02.07</div>
<div class="t" style="top:137.8px;font-size:4.1px;line-height:6.1px;color:#222;font-weight:bold;left:151.7px;transform-origin:0 50%;transform:scaleX(0.86);">Mon</div>
<div class="t" style="top:143.1px;font-size:4.1px;line-height:6.1px;color:#222;font-weight:bold;left:151.7px;transform-origin:0 50%;transform:scaleX(0.86);">19.03.07</div>
<div class="t" style="top:142.6px;font-size:4.1px;line-height:6.1px;color:#222;font-weight:bold;left:62.5px;transform-origin:0 50%;transform:scaleX(0.88);">Schulung und</div>
<div class="t" style="top:147.6px;font-size:4.1px;line-height:6.1px;color:#222;font-weight:bold;left:62.5px;transform-origin:0 50%;transform:scaleX(0.88);">Bereitschaft</div>
<div class="t" style="top:38.6px;font-size:3px;line-height:5px;color:#999;left:176.0px;transform-origin:0 50%;transform:scaleX(0.9);">'06</div>
<div class="t" style="top:38.6px;font-size:3px;line-height:5px;color:#999;left:184.0px;transform-origin:0 50%;transform:scaleX(0.9);">31 Dez '06</div>
<div class="t" style="top:43.4px;font-size:3px;line-height:5px;color:#999;left:178.0px;width:0;display:flex;justify-content:center;">S</div>
<div class="t" style="top:43.4px;font-size:3px;line-height:5px;color:#999;left:185.0px;width:0;display:flex;justify-content:center;">M</div>
<div class="t" style="top:43.4px;font-size:3px;line-height:5px;color:#999;left:192.0px;width:0;display:flex;justify-content:center;">D</div>
<div class="t" style="top:43.4px;font-size:3px;line-height:5px;color:#999;left:198.0px;width:0;display:flex;justify-content:center;">M</div>
<div class="abs" style="left:174.4px;top:47.2px;width:25.6px;height:0.8px;background:#bbb;"></div>
<div class="abs" style="left:188.6px;top:48.0px;width:0;height:106px;border-left:1px dashed #777"></div>
<div class="t" style="top:59.5px;font-size:4px;line-height:6px;color:#222;font-weight:bold;left:191.4px;transform-origin:0 50%;transform:scaleX(0.88);">01.0</div>
<div class="t" style="top:60.4px;font-size:2.2px;line-height:4.2px;color:#333;left:188.4px;transform-origin:0 50%;">◆</div>
<div class="abs" style="left:188.6px;top:77.4px;width:8.9px;height:0.9px;background:#555;"></div>
<div class="abs" style="left:197.0px;top:77.4px;width:0.8px;height:2.6px;background:#555;"></div>
<div class="abs" style="left:188.6px;top:84.4px;width:8.9px;height:0.9px;background:#555;"></div>
<div class="abs" style="left:197.0px;top:84.4px;width:0.8px;height:2.6px;background:#555;"></div>
</div>
  <div class="lbl" id="l_r3t6" style="left:1139px;top:799px">Kundendienst</div>
  <div class="tile" id="r3t7" style="left:1369px;top:636px"><div class="t" style="top:4.3px;font-size:3.2px;line-height:5.2px;color:#8c8c8c;left:28.0px;transform-origin:0 50%;transform:scaleX(0.9);">Die 01.03</div>
<div class="abs" style="left:27.0px;top:5.5px;width:0.6px;height:3.9px;background:#888;"></div>
<div class="t" style="top:4.3px;font-size:3.2px;line-height:5.2px;color:#8c8c8c;left:56.7px;transform-origin:0 50%;transform:scaleX(0.9);">Don 03.03</div>
<div class="abs" style="left:55.7px;top:5.5px;width:0.6px;height:3.9px;background:#888;"></div>
<div class="t" style="top:4.3px;font-size:3.2px;line-height:5.2px;color:#8c8c8c;left:86.7px;transform-origin:0 50%;transform:scaleX(0.9);">Sam 05.03</div>
<div class="abs" style="left:85.7px;top:5.5px;width:0.6px;height:3.9px;background:#888;"></div>
<div class="t" style="top:4.3px;font-size:3.2px;line-height:5.2px;color:#8c8c8c;left:115.6px;transform-origin:0 50%;transform:scaleX(0.9);">Mon 07.03</div>
<div class="abs" style="left:114.6px;top:5.5px;width:0.6px;height:3.9px;background:#888;"></div>
<div class="t" style="top:4.3px;font-size:3.2px;line-height:5.2px;color:#8c8c8c;left:144.2px;transform-origin:0 50%;transform:scaleX(0.9);">Mit 09.03</div>
<div class="abs" style="left:143.2px;top:5.5px;width:0.6px;height:3.9px;background:#888;"></div>
<div class="t" style="top:4.3px;font-size:3.2px;line-height:5.2px;color:#8c8c8c;left:173.3px;transform-origin:0 50%;transform:scaleX(0.9);">Fre 11.03</div>
<div class="abs" style="left:172.3px;top:5.5px;width:0.6px;height:3.9px;background:#888;"></div>
<div class="t" style="top:9.1px;font-size:3.2px;line-height:5.2px;color:#8c8c8c;right:calc(100% - 24.2px);transform-origin:100% 50%;transform:scaleX(0.9);">Anfang</div>
<div class="t" style="top:14.1px;font-size:3.2px;line-height:5.2px;color:#8c8c8c;right:calc(100% - 24.2px);transform-origin:100% 50%;transform:scaleX(0.9);">Die 01.03.05</div>
<div class="abs" style="left:26.7px;top:9.0px;width:180.0px;height:11.3px;background:#e6e9f2;border:1px solid #3a3a3a;"></div>
<div class="t" style="top:10.5px;font-size:3.5px;line-height:5.5px;color:#444;font-weight:bold;left:29.4px;transform-origin:0 50%;transform:scaleX(0.88);">Phase 1 - Planung</div>
<div class="t" style="top:15.7px;font-size:3.2px;line-height:5.2px;color:#8a8a8a;left:29.4px;transform-origin:0 50%;transform:scaleX(0.9);">Die 01.03.05 - Mit 09.03.05</div>
<div class="t" style="top:10.5px;font-size:3.5px;line-height:5.5px;color:#444;font-weight:bold;left:161.4px;transform-origin:0 50%;transform:scaleX(0.88);">Phase 2 - Anführung</div>
<div class="t" style="top:15.7px;font-size:3.2px;line-height:5.2px;color:#8a8a8a;left:161.4px;transform-origin:0 50%;transform:scaleX(0.9);">Don 10.03.05 - Don 17.0</div>
<div class="abs" style="left:6.0px;top:25.3px;width:194.0px;height:1.2px;background:#9a9a9a;"></div>
<div class="abs" style="left:6.2px;top:27.7px;width:1.0px;height:125.3px;background:#4a4a4a;"></div>
<div class="abs" style="left:17.0px;top:27.7px;width:1.0px;height:125.3px;background:#4a4a4a;"></div>
<div class="abs" style="left:52.0px;top:27.7px;width:1.0px;height:125.3px;background:#4a4a4a;"></div>
<div class="abs" style="left:102.8px;top:27.7px;width:1.0px;height:125.3px;background:#4a4a4a;"></div>
<div class="abs" style="left:127.5px;top:27.7px;width:1.0px;height:125.3px;background:#4a4a4a;"></div>
<div class="abs" style="left:151.7px;top:27.7px;width:1.0px;height:125.3px;background:#4a4a4a;"></div>
<div class="abs" style="left:175.9px;top:27.7px;width:1.0px;height:125.3px;background:#4a4a4a;"></div>
<div class="abs" style="left:6.7px;top:27.2px;width:169.7px;height:1.0px;background:#4a4a4a;"></div>
<div class="abs" style="left:6.7px;top:38.1px;width:169.7px;height:1.0px;background:#4a4a4a;"></div>
<div class="abs" style="left:6.7px;top:49.7px;width:169.7px;height:1.0px;background:#4a4a4a;"></div>
<div class="abs" style="left:6.7px;top:72.8px;width:169.7px;height:1.0px;background:#4a4a4a;"></div>
<div class="abs" style="left:6.7px;top:90.8px;width:169.7px;height:1.0px;background:#4a4a4a;"></div>
<div class="abs" style="left:6.7px;top:97.8px;width:169.7px;height:1.0px;background:#4a4a4a;"></div>
<div class="abs" style="left:6.7px;top:109.7px;width:169.7px;height:1.0px;background:#4a4a4a;"></div>
<div class="abs" style="left:6.7px;top:121.7px;width:169.7px;height:1.0px;background:#4a4a4a;"></div>
<div class="abs" style="left:6.7px;top:133.6px;width:169.7px;height:1.0px;background:#4a4a4a;"></div>
<div class="abs" style="left:6.7px;top:139.7px;width:169.7px;height:1.0px;background:#4a4a4a;"></div>
<div class="abs" style="left:6.7px;top:145.8px;width:169.7px;height:1.0px;background:#4a4a4a;"></div>
<div class="abs" style="left:9.6px;top:31.0px;width:4.8px;height:4.8px;border-radius:50%;background:#2f4a80"></div>
<div class="t" style="top:33.0px;font-size:3.3px;line-height:5.3px;color:#a0a0a0;left:20.0px;transform-origin:0 50%;transform:scaleX(0.9);">Vorgangsmodus</div>
<div class="t" style="top:33.0px;font-size:3.3px;line-height:5.3px;color:#a0a0a0;left:54.4px;transform-origin:0 50%;transform:scaleX(0.9);">Vorgangsname</div>
<div class="t" style="top:33.0px;font-size:3.3px;line-height:5.3px;color:#a0a0a0;left:105.3px;transform-origin:0 50%;transform:scaleX(0.9);">Dauer</div>
<div class="t" style="top:33.0px;font-size:3.3px;line-height:5.3px;color:#a0a0a0;left:130.3px;transform-origin:0 50%;transform:scaleX(0.9);">Anfang</div>
<div class="t" style="top:33.0px;font-size:3.3px;line-height:5.3px;color:#a0a0a0;left:153.9px;transform-origin:0 50%;transform:scaleX(0.9);">Ende</div>
<div class="t" style="top:33.7px;font-size:3px;line-height:5px;color:#888;left:50.0px;width:0;display:flex;justify-content:center;">▾</div>
<div class="t" style="top:33.7px;font-size:3px;line-height:5px;color:#888;left:100.5px;width:0;display:flex;justify-content:center;">▾</div>
<div class="t" style="top:33.7px;font-size:3px;line-height:5px;color:#888;left:125.5px;width:0;display:flex;justify-content:center;">▾</div>
<div class="t" style="top:33.7px;font-size:3px;line-height:5px;color:#888;left:149.5px;width:0;display:flex;justify-content:center;">▾</div>
<div class="t" style="top:33.7px;font-size:3px;line-height:5px;color:#888;left:174.0px;width:0;display:flex;justify-content:center;">▾</div>
<div class="t" style="top:40.6px;font-size:2.4px;line-height:4.4px;color:#333;left:54.8px;transform-origin:0 50%;">◢</div>
<div class="abs" style="left:19.2px;top:40.9px;width:3.0px;height:1.6px;background:#5b6f94;"></div>
<div class="abs" style="left:21.2px;top:42.2px;width:1.6px;height:1.3px;background:#5b6f94;"></div>
<div class="t" style="top:39.6px;font-size:4.3px;line-height:6.3px;color:#222;font-weight:bold;left:58.0px;transform-origin:0 50%;transform:scaleX(0.88);">Markteinführung des</div>
<div class="t" style="top:44.9px;font-size:4.3px;line-height:6.3px;color:#222;font-weight:bold;left:58.0px;transform-origin:0 50%;transform:scaleX(0.88);">neuen Produkts</div>
<div class="t" style="top:39.6px;font-size:4.3px;line-height:6.3px;color:#222;font-weight:bold;left:104.4px;transform-origin:0 50%;transform:scaleX(0.88);">20 Tage?</div>
<div class="t" style="top:39.6px;font-size:4.3px;line-height:6.3px;color:#222;font-weight:bold;left:128.9px;transform-origin:0 50%;transform:scaleX(0.86);">Die</div>
<div class="t" style="top:44.9px;font-size:4.3px;line-height:6.3px;color:#222;font-weight:bold;left:128.9px;transform-origin:0 50%;transform:scaleX(0.86);">01.03.05</div>
<div class="t" style="top:39.6px;font-size:4.3px;line-height:6.3px;color:#222;font-weight:bold;left:153.0px;transform-origin:0 50%;transform:scaleX(0.86);">Mon</div>
<div class="t" style="top:44.9px;font-size:4.3px;line-height:6.3px;color:#222;font-weight:bold;left:153.0px;transform-origin:0 50%;transform:scaleX(0.86);">28.03.05</div>
<div class="abs" style="left:19.2px;top:52.8px;width:3.0px;height:1.6px;background:#5b6f94;"></div>
<div class="abs" style="left:21.2px;top:54.1px;width:1.6px;height:1.3px;background:#5b6f94;"></div>
<div class="t" style="top:51.7px;font-size:4px;line-height:6px;color:#777;left:62.2px;transform-origin:0 50%;transform:scaleX(0.88);">In der Anmerkung</div>
<div class="t" style="top:57.1px;font-size:4px;line-height:6px;color:#777;left:62.2px;transform-origin:0 50%;transform:scaleX(0.88);">finden Sie eine</div>
<div class="t" style="top:62.5px;font-size:4px;line-height:6px;color:#777;left:62.2px;transform-origin:0 50%;transform:scaleX(0.88);">Erläuterung zum</div>
<div class="t" style="top:67.9px;font-size:4px;line-height:6px;color:#777;left:62.2px;transform-origin:0 50%;transform:scaleX(0.88);">Zweck dieser Vorlage</div>
<div class="t" style="top:51.7px;font-size:4px;line-height:6px;color:#777;left:104.4px;transform-origin:0 50%;transform:scaleX(0.88);">0 Tage</div>
<div class="t" style="top:51.7px;font-size:4px;line-height:6px;color:#777;left:128.9px;transform-origin:0 50%;transform:scaleX(0.86);">Die 01.03.05</div>
<div class="t" style="top:51.7px;font-size:4px;line-height:6px;color:#777;left:153.0px;transform-origin:0 50%;transform:scaleX(0.86);">Die 01.03.05</div>
<div class="t" style="top:75.9px;font-size:2.4px;line-height:4.4px;color:#333;left:59.0px;transform-origin:0 50%;">◢</div>
<div class="abs" style="left:19.2px;top:76.2px;width:3.0px;height:1.6px;background:#5b6f94;"></div>
<div class="abs" style="left:21.2px;top:77.5px;width:1.6px;height:1.3px;background:#5b6f94;"></div>
<div class="t" style="top:75.1px;font-size:4.1px;line-height:6.1px;color:#222;font-weight:bold;left:62.2px;transform-origin:0 50%;transform:scaleX(0.88);">Vorbereitung auf die</div>
<div class="t" style="top:80.5px;font-size:4.1px;line-height:6.1px;color:#222;font-weight:bold;left:62.2px;transform-origin:0 50%;transform:scaleX(0.88);">Markteinführung des</div>
<div class="t" style="top:85.8px;font-size:4.1px;line-height:6.1px;color:#222;font-weight:bold;left:62.2px;transform-origin:0 50%;transform:scaleX(0.88);">neuen Produkts</div>
<div class="t" style="top:75.1px;font-size:4.1px;line-height:6.1px;color:#222;font-weight:bold;left:104.4px;transform-origin:0 50%;transform:scaleX(0.88);">20 Tage?</div>
<div class="t" style="top:75.1px;font-size:4.1px;line-height:6.1px;color:#222;font-weight:bold;left:128.9px;transform-origin:0 50%;transform:scaleX(0.86);">Die 01.03.05</div>
<div class="t" style="top:75.1px;font-size:4.1px;line-height:6.1px;color:#222;font-weight:bold;left:153.0px;transform-origin:0 50%;transform:scaleX(0.86);">Mon</div>
<div class="t" style="top:80.5px;font-size:4.1px;line-height:6.1px;color:#222;font-weight:bold;left:153.0px;transform-origin:0 50%;transform:scaleX(0.86);">28.03.05</div>
<div class="abs" style="left:19.2px;top:93.9px;width:3.0px;height:1.6px;background:#5b6f94;"></div>
<div class="abs" style="left:21.2px;top:95.2px;width:1.6px;height:1.3px;background:#5b6f94;"></div>
<div class="t" style="top:92.7px;font-size:4.1px;line-height:6.1px;color:#222;font-weight:bold;left:67.2px;transform-origin:0 50%;transform:scaleX(0.88);">Phase 1 - Planung</div>
<div class="t" style="top:92.7px;font-size:4.1px;line-height:6.1px;color:#222;font-weight:bold;left:104.4px;transform-origin:0 50%;transform:scaleX(0.88);">7 Tage?</div>
<div class="t" style="top:92.7px;font-size:4.1px;line-height:6.1px;color:#222;font-weight:bold;left:128.9px;transform-origin:0 50%;transform:scaleX(0.86);">Die 01.03.05</div>
<div class="t" style="top:92.7px;font-size:4.1px;line-height:6.1px;color:#222;font-weight:bold;left:153.0px;transform-origin:0 50%;transform:scaleX(0.86);">Mit 09.03.05</div>
<div class="abs" style="left:19.2px;top:100.3px;width:3.0px;height:1.6px;background:#5b6f94;"></div>
<div class="abs" style="left:21.2px;top:101.6px;width:1.6px;height:1.3px;background:#5b6f94;"></div>
<div class="t" style="top:99.1px;font-size:4.1px;line-height:6.1px;color:#222;font-weight:bold;left:67.2px;transform-origin:0 50%;transform:scaleX(0.88);">Phase 2 -</div>
<div class="t" style="top:104.4px;font-size:4.1px;line-height:6.1px;color:#222;font-weight:bold;left:67.2px;transform-origin:0 50%;transform:scaleX(0.88);">Anführung</div>
<div class="t" style="top:99.1px;font-size:4.1px;line-height:6.1px;color:#222;font-weight:bold;left:104.4px;transform-origin:0 50%;transform:scaleX(0.88);">6 Tage?</div>
<div class="t" style="top:99.1px;font-size:4.1px;line-height:6.1px;color:#222;font-weight:bold;left:128.9px;transform-origin:0 50%;transform:scaleX(0.86);">Don</div>
<div class="t" style="top:104.4px;font-size:4.1px;line-height:6.1px;color:#222;font-weight:bold;left:128.9px;transform-origin:0 50%;transform:scaleX(0.86);">10.03.05</div>
<div class="t" style="top:99.1px;font-size:4.1px;line-height:6.1px;color:#222;font-weight:bold;left:153.0px;transform-origin:0 50%;transform:scaleX(0.86);">Don</div>
<div class="t" style="top:104.4px;font-size:4.1px;line-height:6.1px;color:#222;font-weight:bold;left:153.0px;transform-origin:0 50%;transform:scaleX(0.86);">17.03.05</div>
<div class="abs" style="left:19.2px;top:112.3px;width:3.0px;height:1.6px;background:#5b6f94;"></div>
<div class="abs" style="left:21.2px;top:113.6px;width:1.6px;height:1.3px;background:#5b6f94;"></div>
<div class="t" style="top:111.1px;font-size:4.1px;line-height:6.1px;color:#222;font-weight:bold;left:67.2px;transform-origin:0 50%;transform:scaleX(0.88);">Phase 3:</div>
<div class="t" style="top:116.4px;font-size:4.1px;line-height:6.1px;color:#222;font-weight:bold;left:67.2px;transform-origin:0 50%;transform:scaleX(0.88);">Ausführung</div>
<div class="t" style="top:111.1px;font-size:4.1px;line-height:6.1px;color:#222;font-weight:bold;left:104.4px;transform-origin:0 50%;transform:scaleX(0.88);">4 Tage?</div>
<div class="t" style="top:111.1px;font-size:4.1px;line-height:6.1px;color:#222;font-weight:bold;left:128.9px;transform-origin:0 50%;transform:scaleX(0.86);">Fre 18.03.05</div>
<div class="t" style="top:111.1px;font-size:4.1px;line-height:6.1px;color:#222;font-weight:bold;left:153.0px;transform-origin:0 50%;transform:scaleX(0.86);">Mit 23.03.05</div>
<div class="abs" style="left:19.2px;top:124.2px;width:3.0px;height:1.6px;background:#5b6f94;"></div>
<div class="abs" style="left:21.2px;top:125.5px;width:1.6px;height:1.3px;background:#5b6f94;"></div>
<div class="t" style="top:123.1px;font-size:4.1px;line-height:6.1px;color:#222;font-weight:bold;left:67.2px;transform-origin:0 50%;transform:scaleX(0.88);">Phase 4 - Freigabe</div>
<div class="t" style="top:128.3px;font-size:4.1px;line-height:6.1px;color:#222;font-weight:bold;left:67.2px;transform-origin:0 50%;transform:scaleX(0.88);">zur Fertigung</div>
<div class="t" style="top:123.1px;font-size:4.1px;line-height:6.1px;color:#222;font-weight:bold;left:104.4px;transform-origin:0 50%;transform:scaleX(0.88);">3 Tage?</div>
<div class="t" style="top:123.1px;font-size:4.1px;line-height:6.1px;color:#222;font-weight:bold;left:128.9px;transform-origin:0 50%;transform:scaleX(0.86);">Don</div>
<div class="t" style="top:128.3px;font-size:4.1px;line-height:6.1px;color:#222;font-weight:bold;left:128.9px;transform-origin:0 50%;transform:scaleX(0.86);">24.03.05</div>
<div class="t" style="top:123.1px;font-size:4.1px;line-height:6.1px;color:#222;font-weight:bold;left:153.0px;transform-origin:0 50%;transform:scaleX(0.86);">Mon</div>
<div class="t" style="top:128.3px;font-size:4.1px;line-height:6.1px;color:#222;font-weight:bold;left:153.0px;transform-origin:0 50%;transform:scaleX(0.86);">28.03.05</div>
<div class="abs" style="left:8.5px;top:53.0px;width:3px;height:3px;border-radius:50%;border:.6px solid #aaa"></div>
<div class="abs" style="left:178.9px;top:27.7px;width:1.2px;height:125.3px;background:#4a4a4a;"></div>
<div class="abs" style="left:178.9px;top:27.3px;width:21.1px;height:1.0px;background:#4a4a4a;"></div>
<div class="t" style="top:28.1px;font-size:3px;line-height:5px;color:#999;left:188.6px;transform-origin:0 50%;transform:scaleX(0.9);">17 Feb</div>
<div class="t" style="top:33.4px;font-size:3px;line-height:5px;color:#999;left:183.0px;width:0;display:flex;justify-content:center;">M</div>
<div class="t" style="top:33.4px;font-size:3px;line-height:5px;color:#999;left:191.0px;width:0;display:flex;justify-content:center;">S</div>
<div class="t" style="top:33.4px;font-size:3px;line-height:5px;color:#999;left:197.0px;width:0;display:flex;justify-content:center;">D</div>
<div class="abs" style="left:178.9px;top:38.3px;width:21.1px;height:0.8px;background:#bbb;"></div>
<div class="abs" style="left:189.4px;top:39.0px;width:0;height:115px;border-left:1px dashed #777"></div>
<div class="abs" style="left:189.4px;top:40.2px;width:10.6px;height:0.8px;background:#999;"></div>
<div class="abs" style="left:189.4px;top:75.5px;width:10.6px;height:0.8px;background:#999;"></div>
<div class="abs" style="left:189.4px;top:93.0px;width:10.6px;height:0.8px;background:#999;"></div>
<div class="t" style="top:51.2px;font-size:4px;line-height:6px;color:#222;font-weight:bold;left:192.8px;transform-origin:0 50%;transform:scaleX(0.88);">01.</div>
<div class="t" style="top:52.0px;font-size:2.4px;line-height:4.4px;color:#333;left:189.6px;transform-origin:0 50%;">◆</div>
</div>
  <div class="lbl" id="l_r3t7" style="left:1359px;top:799px">Einführung eines neuen Pr...</div>
  <div class="t" id="q1" style="left:582px;top:845px;width:600px;text-align:center;font-size:12.8px;line-height:16px;font-weight:bold;color:#3b3b3b">Ist nicht das Richtige dabei?</div>
  <div class="t" id="q2" style="left:582px;top:866px;width:600px;text-align:center;font-size:12.8px;line-height:16px;color:#444">Im oben angezeigten Suchfeld können Sie nach weiteren Vorlagen suchen.</div>
</div>
<div id="dlg" class="abs" style="left:492px;top:259px;width:937px;height:522px;background:#fff;border:1px solid #4f6657;box-shadow:0 0 5px 1px rgba(70,100,80,.5)">
  <div class="abs" id="pv" style="left:123px;top:94px;width:392px;height:293px;border:1px solid #ababab;overflow:hidden;background:#fff"><div class="t" style="top:9.2px;font-size:6.5px;line-height:8.5px;color:#8a8a8a;left:54.0px;transform-origin:0 50%;transform:scaleX(0.9);">01 Januar</div>
<div class="abs" style="left:52.0px;top:11.0px;width:1.0px;height:8.0px;background:#aaa;"></div>
<div class="t" style="top:9.2px;font-size:6.5px;line-height:8.5px;color:#8a8a8a;left:124.0px;transform-origin:0 50%;transform:scaleX(0.9);">01 Februar</div>
<div class="abs" style="left:122.0px;top:11.0px;width:1.0px;height:8.0px;background:#aaa;"></div>
<div class="t" style="top:9.2px;font-size:6.5px;line-height:8.5px;color:#8a8a8a;left:189.0px;transform-origin:0 50%;transform:scaleX(0.9);">01 März</div>
<div class="abs" style="left:187.0px;top:11.0px;width:1.0px;height:8.0px;background:#aaa;"></div>
<div class="t" style="top:9.2px;font-size:6.5px;line-height:8.5px;color:#8a8a8a;left:260.0px;transform-origin:0 50%;transform:scaleX(0.9);">01 April</div>
<div class="abs" style="left:258.0px;top:11.0px;width:1.0px;height:8.0px;background:#aaa;"></div>
<div class="t" style="top:9.2px;font-size:6.5px;line-height:8.5px;color:#8a8a8a;left:329.0px;transform-origin:0 50%;transform:scaleX(0.9);">01 Mai</div>
<div class="abs" style="left:327.0px;top:11.0px;width:1.0px;height:8.0px;background:#aaa;"></div>
<div class="t" style="top:16.8px;font-size:6.5px;line-height:8.5px;color:#8a8a8a;right:calc(100% - 49.0px);transform-origin:100% 50%;transform:scaleX(0.9);">Anfang</div>
<div class="t" style="top:25.4px;font-size:6.5px;line-height:8.5px;color:#8a8a8a;right:calc(100% - 49.0px);transform-origin:100% 50%;transform:scaleX(0.9);">Mon 01.01.07</div>
<div class="abs" style="left:52.0px;top:19.0px;width:340.0px;height:17.0px;background:#e0e6f2;"></div>
<div class="abs" style="left:351.0px;top:36.0px;width:50.0px;height:34.0px;background:#e6ecf7;"></div>
<div class="abs" style="left:52.0px;top:19.0px;width:345.0px;height:52.0px;background:transparent;border:1px solid #9a9a9a;"></div>
<div class="t" style="top:19.6px;font-size:6.2px;line-height:8.2px;color:#3a3a3a;font-weight:bold;left:57.0px;transform-origin:0 50%;transform:scaleX(0.85);">Überprüfen von</div>
<div class="t" style="top:27.9px;font-size:6.2px;line-height:8.2px;color:#555;left:57.0px;transform-origin:0 50%;transform:scaleX(0.88);">Mon 01.01.07 - Die 06.02.07</div>
<div class="t" style="top:19.6px;font-size:6.2px;line-height:8.2px;color:#3a3a3a;font-weight:bold;left:142.0px;transform-origin:0 50%;transform:scaleX(0.85);">Entwickeln von Kampagnenkonzepten</div>
<div class="t" style="top:27.9px;font-size:6.2px;line-height:8.2px;color:#555;left:142.0px;transform-origin:0 50%;transform:scaleX(0.88);">Mit 07.02.07 - Mon 16.04.07</div>
<div class="t" style="top:19.6px;font-size:6.2px;line-height:8.2px;color:#3a3a3a;font-weight:bold;left:300.5px;transform-origin:0 50%;transform:scaleX(0.85);">Erstellen einer</div>
<div class="t" style="top:27.9px;font-size:6.2px;line-height:8.2px;color:#555;left:300.5px;transform-origin:0 50%;transform:scaleX(0.88);">Die 17.04.07 - Don</div>
<div class="t" style="top:19.6px;font-size:6.2px;line-height:8.2px;color:#3a3a3a;font-weight:bold;left:355.6px;transform-origin:0 50%;transform:scaleX(0.85);">Kommunikati</div>
<div class="t" style="top:27.9px;font-size:6.2px;line-height:8.2px;color:#555;left:355.6px;transform-origin:0 50%;transform:scaleX(0.88);">Fre 11.05.07 -</div>
<div class="t" style="top:36.6px;font-size:6.2px;line-height:8.2px;color:#3a3a3a;font-weight:bold;left:355.6px;transform-origin:0 50%;transform:scaleX(0.85);">Kundenbezie</div>
<div class="t" style="top:44.9px;font-size:6.2px;line-height:8.2px;color:#555;left:355.6px;transform-origin:0 50%;transform:scaleX(0.88);">Fre 11.05.07 -</div>
<div class="t" style="top:53.6px;font-size:6.2px;line-height:8.2px;color:#3a3a3a;font-weight:bold;left:355.6px;transform-origin:0 50%;transform:scaleX(0.85);">Analysiere</div>
<div class="t" style="top:61.9px;font-size:6.2px;line-height:8.2px;color:#555;left:355.6px;transform-origin:0 50%;transform:scaleX(0.88);">Fre</div>
<div class="abs" style="left:12.0px;top:118.0px;width:291.0px;height:1.0px;background:#e2e2e2;"></div>
<div class="abs" style="left:12.5px;top:118.0px;width:1.0px;height:173.0px;background:#d6d6d6;"></div>
<div class="abs" style="left:69.4px;top:118.0px;width:1.0px;height:173.0px;background:#d6d6d6;"></div>
<div class="abs" style="left:184.3px;top:118.0px;width:1.0px;height:173.0px;background:#d6d6d6;"></div>
<div class="abs" style="left:223.6px;top:118.0px;width:1.0px;height:173.0px;background:#d6d6d6;"></div>
<div class="abs" style="left:263.5px;top:118.0px;width:1.0px;height:173.0px;background:#d6d6d6;"></div>
<div class="abs" style="left:302.4px;top:118.0px;width:1.0px;height:173.0px;background:#d6d6d6;"></div>
<div class="t" style="top:126.8px;font-size:6.5px;line-height:8.5px;color:#999;left:14.0px;transform-origin:0 50%;transform:scaleX(0.9);">Vorgangsmodus</div>
<div class="t" style="top:126.8px;font-size:6.5px;line-height:8.5px;color:#999;left:71.0px;transform-origin:0 50%;transform:scaleX(0.9);">Vorgangsname</div>
<div class="t" style="top:126.8px;font-size:6.5px;line-height:8.5px;color:#999;left:186.0px;transform-origin:0 50%;transform:scaleX(0.9);">Dauer</div>
<div class="t" style="top:126.8px;font-size:6.5px;line-height:8.5px;color:#999;left:225.0px;transform-origin:0 50%;transform:scaleX(0.9);">Anfang</div>
<div class="t" style="top:126.8px;font-size:6.5px;line-height:8.5px;color:#999;left:265.0px;transform-origin:0 50%;transform:scaleX(0.9);">Ende</div>
<div class="t" style="top:127.5px;font-size:6px;line-height:8px;color:#777;left:64.0px;width:0;display:flex;justify-content:center;">▾</div>
<div class="t" style="top:127.5px;font-size:6px;line-height:8px;color:#777;left:180.0px;width:0;display:flex;justify-content:center;">▾</div>
<div class="t" style="top:127.5px;font-size:6px;line-height:8px;color:#777;left:219.0px;width:0;display:flex;justify-content:center;">▾</div>
<div class="t" style="top:127.5px;font-size:6px;line-height:8px;color:#777;left:258.0px;width:0;display:flex;justify-content:center;">▾</div>
<div class="t" style="top:127.5px;font-size:6px;line-height:8px;color:#777;left:298.0px;width:0;display:flex;justify-content:center;">▾</div>
<div class="abs" style="left:12.0px;top:136.5px;width:291.0px;height:1.0px;background:#cbcbcb;"></div>
<div class="abs" style="left:12.0px;top:157.5px;width:291.0px;height:1.0px;background:#cbcbcb;"></div>
<div class="abs" style="left:12.0px;top:176.3px;width:291.0px;height:1.0px;background:#cbcbcb;"></div>
<div class="abs" style="left:12.0px;top:196.2px;width:291.0px;height:1.0px;background:#cbcbcb;"></div>
<div class="abs" style="left:12.0px;top:215.5px;width:291.0px;height:1.0px;background:#cbcbcb;"></div>
<div class="abs" style="left:12.0px;top:245.5px;width:291.0px;height:1.0px;background:#cbcbcb;"></div>
<div class="abs" style="left:12.0px;top:274.0px;width:291.0px;height:1.0px;background:#cbcbcb;"></div>
<div class="abs" style="left:14.0px;top:140.1px;width:6.0px;height:3.0px;background:#6f86a8;"></div>
<div class="abs" style="left:18.0px;top:142.1px;width:3.0px;height:2.5px;background:#6f86a8;"></div>
<div class="t" style="top:140.5px;font-size:4px;line-height:6px;color:#444;left:73.0px;transform-origin:0 50%;">◢</div>
<div class="t" style="top:138.1px;font-size:7px;line-height:9px;color:#1c1c1c;font-weight:bold;left:77.5px;transform-origin:0 50%;transform:scaleX(0.885);">Planung einer</div>
<div class="t" style="top:146.9px;font-size:7px;line-height:9px;color:#1c1c1c;font-weight:bold;left:77.5px;transform-origin:0 50%;transform:scaleX(0.885);">Marketingkampagne</div>
<div class="t" style="top:138.1px;font-size:7px;line-height:9px;color:#1c1c1c;font-weight:bold;left:185.8px;transform-origin:0 50%;transform:scaleX(0.9);">205 Tage?</div>
<div class="t" style="top:138.1px;font-size:7px;line-height:9px;color:#1c1c1c;font-weight:bold;left:225.0px;transform-origin:0 50%;transform:scaleX(0.9);">Mon</div>
<div class="t" style="top:146.9px;font-size:7px;line-height:9px;color:#1c1c1c;font-weight:bold;left:225.0px;transform-origin:0 50%;transform:scaleX(0.9);">01.01.07</div>
<div class="t" style="top:138.1px;font-size:7px;line-height:9px;color:#1c1c1c;font-weight:bold;left:264.5px;transform-origin:0 50%;transform:scaleX(0.9);">Fre</div>
<div class="t" style="top:146.9px;font-size:7px;line-height:9px;color:#1c1c1c;font-weight:bold;left:264.5px;transform-origin:0 50%;transform:scaleX(0.9);">12.10.07</div>
<div class="abs" style="left:14.0px;top:160.0px;width:6.0px;height:3.0px;background:#6f86a8;"></div>
<div class="abs" style="left:18.0px;top:162.0px;width:3.0px;height:2.5px;background:#6f86a8;"></div>
<div class="t" style="top:158.0px;font-size:7px;line-height:9px;color:#888;left:80.0px;transform-origin:0 50%;">›</div>
<div class="t" style="top:158.0px;font-size:7px;line-height:9px;color:#1c1c1c;font-weight:bold;left:85.0px;transform-origin:0 50%;transform:scaleX(0.885);">Überprüfen von</div>
<div class="t" style="top:166.8px;font-size:7px;line-height:9px;color:#1c1c1c;font-weight:bold;left:85.0px;transform-origin:0 50%;transform:scaleX(0.885);">Geschäftsstrategien</div>
<div class="t" style="top:158.0px;font-size:7px;line-height:9px;color:#1c1c1c;font-weight:bold;left:185.8px;transform-origin:0 50%;transform:scaleX(0.9);">27 Tage?</div>
<div class="t" style="top:158.0px;font-size:7px;line-height:9px;color:#1c1c1c;font-weight:bold;left:225.0px;transform-origin:0 50%;transform:scaleX(0.9);">Mon</div>
<div class="t" style="top:166.8px;font-size:7px;line-height:9px;color:#1c1c1c;font-weight:bold;left:225.0px;transform-origin:0 50%;transform:scaleX(0.9);">01.01.07</div>
<div class="t" style="top:158.0px;font-size:7px;line-height:9px;color:#1c1c1c;font-weight:bold;left:264.5px;transform-origin:0 50%;transform:scaleX(0.9);">Die 06.02.07</div>
<div class="abs" style="left:14.0px;top:179.5px;width:6.0px;height:3.0px;background:#6f86a8;"></div>
<div class="abs" style="left:18.0px;top:181.5px;width:3.0px;height:2.5px;background:#6f86a8;"></div>
<div class="t" style="top:177.5px;font-size:7px;line-height:9px;color:#888;left:80.0px;transform-origin:0 50%;">›</div>
<div class="t" style="top:177.5px;font-size:7px;line-height:9px;color:#1c1c1c;font-weight:bold;left:85.0px;transform-origin:0 50%;transform:scaleX(0.885);">Entwickeln von</div>
<div class="t" style="top:186.3px;font-size:7px;line-height:9px;color:#1c1c1c;font-weight:bold;left:85.0px;transform-origin:0 50%;transform:scaleX(0.885);">Kampagnenkonzepten</div>
<div class="t" style="top:177.5px;font-size:7px;line-height:9px;color:#1c1c1c;font-weight:bold;left:185.8px;transform-origin:0 50%;transform:scaleX(0.9);">49 Tage?</div>
<div class="t" style="top:177.5px;font-size:7px;line-height:9px;color:#1c1c1c;font-weight:bold;left:225.0px;transform-origin:0 50%;transform:scaleX(0.9);">Mit 07.02.07</div>
<div class="t" style="top:177.5px;font-size:7px;line-height:9px;color:#1c1c1c;font-weight:bold;left:264.5px;transform-origin:0 50%;transform:scaleX(0.9);">Mon</div>
<div class="t" style="top:186.3px;font-size:7px;line-height:9px;color:#1c1c1c;font-weight:bold;left:264.5px;transform-origin:0 50%;transform:scaleX(0.9);">16.04.07</div>
<div class="abs" style="left:14.0px;top:199.0px;width:6.0px;height:3.0px;background:#6f86a8;"></div>
<div class="abs" style="left:18.0px;top:201.0px;width:3.0px;height:2.5px;background:#6f86a8;"></div>
<div class="t" style="top:197.0px;font-size:7px;line-height:9px;color:#1c1c1c;font-weight:bold;left:85.0px;transform-origin:0 50%;transform:scaleX(0.885);">Erstellen einer</div>
<div class="t" style="top:205.8px;font-size:7px;line-height:9px;color:#1c1c1c;font-weight:bold;left:85.0px;transform-origin:0 50%;transform:scaleX(0.885);">Lokalisierungsstrategie</div>
<div class="t" style="top:197.0px;font-size:7px;line-height:9px;color:#1c1c1c;font-weight:bold;left:185.8px;transform-origin:0 50%;transform:scaleX(0.9);">18 Tage?</div>
<div class="t" style="top:197.0px;font-size:7px;line-height:9px;color:#1c1c1c;font-weight:bold;left:225.0px;transform-origin:0 50%;transform:scaleX(0.9);">Die 17.04.07</div>
<div class="t" style="top:197.0px;font-size:7px;line-height:9px;color:#1c1c1c;font-weight:bold;left:264.5px;transform-origin:0 50%;transform:scaleX(0.9);">Don</div>
<div class="t" style="top:205.8px;font-size:7px;line-height:9px;color:#1c1c1c;font-weight:bold;left:264.5px;transform-origin:0 50%;transform:scaleX(0.9);">10.05.07</div>
<div class="abs" style="left:14.0px;top:218.2px;width:6.0px;height:3.0px;background:#6f86a8;"></div>
<div class="abs" style="left:18.0px;top:220.2px;width:3.0px;height:2.5px;background:#6f86a8;"></div>
<div class="t" style="top:216.2px;font-size:7px;line-height:9px;color:#888;left:80.0px;transform-origin:0 50%;">›</div>
<div class="t" style="top:216.2px;font-size:7px;line-height:9px;color:#1c1c1c;font-weight:bold;left:85.0px;transform-origin:0 50%;transform:scaleX(0.885);">Kommunikation und Schulung in</div>
<div class="t" style="top:225.0px;font-size:7px;line-height:9px;color:#1c1c1c;font-weight:bold;left:85.0px;transform-origin:0 50%;transform:scaleX(0.885);">der Organisation</div>
<div class="t" style="top:216.2px;font-size:7px;line-height:9px;color:#1c1c1c;font-weight:bold;left:185.8px;transform-origin:0 50%;transform:scaleX(0.9);">24 Tage?</div>
<div class="t" style="top:216.2px;font-size:7px;line-height:9px;color:#1c1c1c;font-weight:bold;left:225.0px;transform-origin:0 50%;transform:scaleX(0.9);">Fre 11.05.07</div>
<div class="t" style="top:216.2px;font-size:7px;line-height:9px;color:#1c1c1c;font-weight:bold;left:264.5px;transform-origin:0 50%;transform:scaleX(0.9);">Mit 13.06.07</div>
<div class="abs" style="left:14.0px;top:237.7px;width:6.0px;height:3.0px;background:#6f86a8;"></div>
<div class="abs" style="left:18.0px;top:239.7px;width:3.0px;height:2.5px;background:#6f86a8;"></div>
<div class="t" style="top:235.7px;font-size:7px;line-height:9px;color:#888;left:80.0px;transform-origin:0 50%;">›</div>
<div class="t" style="top:235.7px;font-size:7px;line-height:9px;color:#1c1c1c;font-weight:bold;left:85.0px;transform-origin:0 50%;transform:scaleX(0.885);">Kundenbeziehungsmanagement</div>
<div class="t" style="top:235.7px;font-size:7px;line-height:9px;color:#1c1c1c;font-weight:bold;left:185.8px;transform-origin:0 50%;transform:scaleX(0.9);">16 Tage?</div>
<div class="t" style="top:235.7px;font-size:7px;line-height:9px;color:#1c1c1c;font-weight:bold;left:225.0px;transform-origin:0 50%;transform:scaleX(0.9);">Fre 11.05.07</div>
<div class="t" style="top:235.7px;font-size:7px;line-height:9px;color:#1c1c1c;font-weight:bold;left:264.5px;transform-origin:0 50%;transform:scaleX(0.9);">Fre 01.06.07</div>
<div class="abs" style="left:14.0px;top:248.2px;width:6.0px;height:3.0px;background:#6f86a8;"></div>
<div class="abs" style="left:18.0px;top:250.2px;width:3.0px;height:2.5px;background:#6f86a8;"></div>
<div class="t" style="top:246.2px;font-size:7px;line-height:9px;color:#888;left:80.0px;transform-origin:0 50%;">›</div>
<div class="t" style="top:246.2px;font-size:7px;line-height:9px;color:#1c1c1c;font-weight:bold;left:85.0px;transform-origin:0 50%;transform:scaleX(0.885);">Analysieren regionaler, globaler</div>
<div class="t" style="top:255.0px;font-size:7px;line-height:9px;color:#1c1c1c;font-weight:bold;left:85.0px;transform-origin:0 50%;transform:scaleX(0.885);">und landesspezifischer</div>
<div class="t" style="top:263.8px;font-size:7px;line-height:9px;color:#1c1c1c;font-weight:bold;left:85.0px;transform-origin:0 50%;transform:scaleX(0.885);">Geschäftsmodelle</div>
<div class="t" style="top:246.2px;font-size:7px;line-height:9px;color:#1c1c1c;font-weight:bold;left:185.8px;transform-origin:0 50%;transform:scaleX(0.9);">9 Tage?</div>
<div class="t" style="top:246.2px;font-size:7px;line-height:9px;color:#1c1c1c;font-weight:bold;left:225.0px;transform-origin:0 50%;transform:scaleX(0.9);">Fre 11.05.07</div>
<div class="t" style="top:246.2px;font-size:7px;line-height:9px;color:#1c1c1c;font-weight:bold;left:264.5px;transform-origin:0 50%;transform:scaleX(0.9);">Mit 23.05.07</div>
<div class="abs" style="left:14.0px;top:276.9px;width:6.0px;height:3.0px;background:#6f86a8;"></div>
<div class="abs" style="left:18.0px;top:278.9px;width:3.0px;height:2.5px;background:#6f86a8;"></div>
<div class="t" style="top:274.9px;font-size:7px;line-height:9px;color:#1c1c1c;font-weight:bold;left:85.0px;transform-origin:0 50%;transform:scaleX(0.885);">Entwickeln der Kampagne</div>
<div class="t" style="top:274.9px;font-size:7px;line-height:9px;color:#1c1c1c;font-weight:bold;left:185.8px;transform-origin:0 50%;transform:scaleX(0.9);">14 Tage?</div>
<div class="t" style="top:274.9px;font-size:7px;line-height:9px;color:#1c1c1c;font-weight:bold;left:225.0px;transform-origin:0 50%;transform:scaleX(0.9);">Don</div>
<div class="t" style="top:283.7px;font-size:7px;line-height:9px;color:#1c1c1c;font-weight:bold;left:225.0px;transform-origin:0 50%;transform:scaleX(0.9);">14.06.07</div>
<div class="t" style="top:274.9px;font-size:7px;line-height:9px;color:#1c1c1c;font-weight:bold;left:264.5px;transform-origin:0 50%;transform:scaleX(0.9);">Die 03.07.07</div>
<div class="t" style="top:120.0px;font-size:6px;line-height:8px;color:#999;left:304.0px;transform-origin:0 50%;transform:scaleX(0.85);">'06</div>
<div class="t" style="top:120.0px;font-size:6px;line-height:8px;color:#999;left:316.0px;transform-origin:0 50%;transform:scaleX(0.85);">31 Dez '06</div>
<div class="t" style="top:120.0px;font-size:6px;line-height:8px;color:#999;left:347.0px;transform-origin:0 50%;transform:scaleX(0.85);">21 Jan '07</div>
<div class="t" style="top:120.0px;font-size:6px;line-height:8px;color:#999;left:382.0px;transform-origin:0 50%;transform:scaleX(0.85);">11</div>
<div class="t" style="top:127.5px;font-size:6px;line-height:8px;color:#999;left:310.0px;width:0;display:flex;justify-content:center;transform:scaleX(0.9);">S</div>
<div class="t" style="top:127.5px;font-size:6px;line-height:8px;color:#999;left:322.0px;width:0;display:flex;justify-content:center;transform:scaleX(0.9);">S</div>
<div class="t" style="top:127.5px;font-size:6px;line-height:8px;color:#999;left:334.0px;width:0;display:flex;justify-content:center;transform:scaleX(0.9);">M</div>
<div class="t" style="top:127.5px;font-size:6px;line-height:8px;color:#999;left:346.0px;width:0;display:flex;justify-content:center;transform:scaleX(0.9);">D</div>
<div class="t" style="top:127.5px;font-size:6px;line-height:8px;color:#999;left:358.0px;width:0;display:flex;justify-content:center;transform:scaleX(0.9);">M</div>
<div class="t" style="top:127.5px;font-size:6px;line-height:8px;color:#999;left:370.0px;width:0;display:flex;justify-content:center;transform:scaleX(0.9);">D</div>
<div class="t" style="top:127.5px;font-size:6px;line-height:8px;color:#999;left:382.0px;width:0;display:flex;justify-content:center;transform:scaleX(0.9);">F</div>
<div class="abs" style="left:303.0px;top:136.5px;width:88.0px;height:1.0px;background:#e0e0e0;"></div>
<div class="abs" style="left:318.0px;top:138.0px;width:0;height:154px;border-left:1px dotted #cfcfcf"></div>
<div class="abs" style="left:318.0px;top:160.5px;width:57.0px;height:1.0px;background:#444;"></div>
<div class="abs" style="left:318.0px;top:160.5px;width:1.0px;height:3.5px;background:#444;"></div>
<div class="abs" style="left:374.0px;top:160.5px;width:1.0px;height:3.5px;background:#444;"></div>
<div class="abs" style="left:374.0px;top:180.5px;width:17.0px;height:1.0px;background:#555;"></div>
<div class="abs" style="left:374.0px;top:180.5px;width:1.0px;height:4.5px;background:#555;"></div>
</div>
  <div class="t" id="d1" style="left:490px;top:88px;width:400px;text-align:center;font-size:21px;line-height:27.5px;color:#3a3a3a;white-space:normal">Ihre Vorlage wird<br>heruntergeladen.</div>
  <div class="t" id="d2" style="left:490px;top:147px;width:400px;text-align:center;font-size:15.5px;line-height:18px;color:#333">Plan für eine Marketingkampagne</div>
  <svg class="abs" style="left:904px;top:7px" width="16" height="16" viewBox="0 0 16 16" stroke="#222" stroke-width="1.1" fill="none"><path d="M3 3l10 10M13 3L3 13"/></svg>
  <svg class="abs" style="left:19.200px;top:269.500px" width="32" height="28" viewBox="0 0 32 28" stroke="#222" stroke-width="1.1" fill="none"><path d="M30 14H2.500M14.500 2L2.500 14l12 12"/></svg>
  <svg class="abs" style="left:884px;top:269.300px" width="32" height="28" viewBox="0 0 32 28" stroke="#222" stroke-width="1.1" fill="none"><path d="M2 14h27.500M17.500 2l12 12-12 12"/></svg>
  <svg class="abs" style="left:676px;top:186.300px" width="32" height="24" viewBox="0 0 32 24" fill="#929292"><circle cx="6.500" cy="11" r="2.500"/><circle cx="15.500" cy="9" r="2.800"/><circle cx="25" cy="15.500" r="2.500"/></svg>
</div>
<svg class="abs" style="left:1074px;top:634px" width="36" height="34" viewBox="0 0 36 34"><circle cx="17.400" cy="15.700" r="15.800" fill="#f4f466"/><path d="M12.400 7.100V23.800L16.600 20.200L19.900 25.900L21.900 24.700L19.300 19.600L24 19.300Z" fill="#fff5f0" stroke="#3a3000" stroke-width="1" stroke-linejoin="round"/></svg>
<div id="task" class="abs" style="left:0;top:1040px;width:1920px;height:40px;background:linear-gradient(90deg,#24353e 0%,#23343e 55%,#1b273a 78%,#141b35 100%)">
  <div class="abs" style="left:48px;top:0;width:344px;height:40px;background:#f0f0f0;border:1px solid #cfcfcf"></div>
  <svg class="abs" style="left:0;top:0" width="1920" height="40" viewBox="0 1040 1920 40">
<defs><linearGradient id="gw" x1="0" y1="0" x2="0" y2="1"><stop offset="0" stop-color="#41a5ee"/><stop offset=".35" stop-color="#2b7cd3"/><stop offset=".7" stop-color="#185abd"/><stop offset="1" stop-color="#103f91"/></linearGradient><linearGradient id="gx" x1="0" y1="0" x2="0" y2="1"><stop offset="0" stop-color="#33c481"/><stop offset=".35" stop-color="#21a366"/><stop offset=".7" stop-color="#107c41"/><stop offset="1" stop-color="#185c37"/></linearGradient><linearGradient id="ge" x1="0" y1="0" x2="1" y2="1"><stop offset="0" stop-color="#35c1f1"/><stop offset=".5" stop-color="#1b9de2"/><stop offset="1" stop-color="#0c59a4"/></linearGradient><linearGradient id="ge2" x1="0" y1="0" x2="1" y2="0"><stop offset="0" stop-color="#2bc3d2"/><stop offset="1" stop-color="#6fdc5a"/></linearGradient><linearGradient id="gc" x1="0" y1="0" x2="0" y2="1"><stop offset="0" stop-color="#f4f6fa"/><stop offset="1" stop-color="#c9d0dc"/></linearGradient></defs>
<g fill="#fff"><path d="M16 1054.800l6.600-.9v6.300H16zM23.400 1053.800l8.900-1.200v7.600h-8.900zM16 1061h6.600v6.300l-6.600-.9zM23.400 1061h8.900v7.600l-8.900-1.200z"/></g>
<g fill="none" stroke="#222" stroke-width="1.500"><circle cx="70.500" cy="1057.500" r="5"/><path d="M67 1061.200l-6 6.300"/></g>
<g fill="none" stroke="#fff" stroke-width="1.300"><rect x="410" y="1055.500" width="9.500" height="8"/><path d="M408 1052.800h13.500M408 1066.200h13.500M408 1052.800v2M421.500 1052.800v2M408 1066.200v-2M421.500 1066.200v-2"/><path d="M423.800 1053v3M423.800 1058.500v8" stroke-width="1.500"/></g>
<path d="M456 1052.500q0-1 1-1h6.500l2 2h11.500q1 0 1 1v13h-22z" fill="#e9b93f"/><path d="M456 1055.500h22v12.500h-22z" fill="#f7d568"/><path d="M461 1061h12v7h-12z" fill="#4f9fd8"/><path d="M463.500 1063.500h7v4.500h-7z" fill="#f7d568"/><path d="M456 1067h22v1.200h-22z" fill="#d9a730"/>
<rect x="509" y="1049" width="19" height="22" rx="1.500" fill="url(#gw)"/><rect x="504" y="1053.500" width="13" height="13" rx="1.200" fill="#185abd"/>
<text x="510.500" y="1064" font-family="Liberation Sans,sans-serif" font-weight="bold" font-size="10.500" fill="#fff" text-anchor="middle">W</text>
<rect x="558" y="1049" width="19" height="22" rx="1.500" fill="url(#gx)"/><rect x="552.700" y="1053.500" width="13" height="13" rx="1.200" fill="#107c41"/>
<text x="559.200" y="1064" font-family="Liberation Sans,sans-serif" font-weight="bold" font-size="10.500" fill="#fff" text-anchor="middle">X</text>
<circle cx="615.500" cy="1060" r="11" fill="#ed6c47"/><path d="M615.500 1049a11 11 0 0 1 11 11h-11z" fill="#ff8f6b"/><path d="M604.500 1060a11 11 0 0 0 22 0z" fill="#d35230"/><rect x="601.600" y="1053.500" width="13" height="13" rx="1.200" fill="#c43e1c"/>
<text x="608.100" y="1064" font-family="Liberation Sans,sans-serif" font-weight="bold" font-size="10.500" fill="#fff" text-anchor="middle">P</text>
<path d="M651 1056l11-7.500 11 7.500z" fill="#0f5fa8"/><rect x="651" y="1055" width="22" height="14.500" fill="#1e8ee0"/><path d="M651 1055l11 8 11-8z" fill="#e8f3fc"/><path d="M651 1055l8 8.500L651 1069.500z" fill="#1678c8"/>
<circle cx="676" cy="1066.600" r="9.300" fill="#2b3840" stroke="#e8e8e8" stroke-width="1"/><text x="676" y="1071" font-family="Liberation Sans,sans-serif" font-size="12" fill="#fff" text-anchor="middle" textLength="13" lengthAdjust="spacingAndGlyphs">73</text>
<circle cx="712" cy="1059.700" r="11.300" fill="#e33b2e"/>
<path d="M712 1059.700L702.200 1054.050A11.300 11.300 0 0 0 712 1071L717.650 1061.200z" fill="#2da94f"/>
<path d="M712 1071A11.300 11.300 0 0 0 721.800 1054.050L712 1054.050L717.650 1061.200z" fill="#fdc010"/>
<path d="M702.200 1054.050L712 1059.700 721.800 1054.050A11.300 11.300 0 0 0 702.200 1054.050z" fill="#e33b2e"/>
<circle cx="712" cy="1059.700" r="5.300" fill="#f1f1f1"/><circle cx="712" cy="1059.700" r="4.200" fill="#4a8af4"/>
<circle cx="761" cy="1059.500" r="10.300" fill="#2a2630" stroke="#d6d6d6" stroke-width="1.500"/><g fill="none" stroke="#d6d6d6" stroke-width="1.600"><path d="M759.500 1052.500q3.500 2.500 2 7"/><path d="M767.500 1062.500q-4 1.800-7-1.800"/><path d="M755 1064q.500-4.500 5-5.500"/></g>
<path d="M799 1064a11.200 12 0 0 1 22.400 0" fill="none" stroke="#1515c8" stroke-width="3"/><rect x="797.600" y="1060" width="4.500" height="9" rx="2" fill="#1a1ad0"/><rect x="818.200" y="1060" width="4.500" height="9" rx="2" fill="#1a1ad0"/><ellipse cx="810.200" cy="1062" rx="7.200" ry="6.800" fill="#f7a51b"/><path d="M803.500 1062.500l2-2 1.500 3 1.500-4 1.500 5 1.500-4 1.500 3 1.500-2 1.500 1" fill="none" stroke="#e0241a" stroke-width="1.600"/>
<rect x="847.300" y="1048.400" width="18.700" height="22.600" fill="#f2f2f4"/><rect x="848.500" y="1049.500" width="16.300" height="13" fill="#5b83c4"/><path d="M850 1054l5-3 4 2 5-2.500v3l-5 3-4-1-5 2z" fill="#b9cbe8"/><path d="M849 1066l16-9" stroke="#c42b2b" stroke-width="1.500"/><path d="M849 1064.500h8v2.500h-8z" fill="#22244a"/><rect x="856" y="1066" width="9" height="3.500" fill="#9aa0c8"/>
<circle cx="908" cy="1059.500" r="12" fill="url(#ge)"/><path d="M896.300 1057a12 12 0 0 1 23.500 1.500q.200 5-5 5.500h-5.500q1-3-1-4.800q-3-2-6.500.2q-3.500 2.500-5.500-2.400z" fill="url(#ge2)"/><path d="M908 1071.500a12 12 0 0 1-11.500-8q1.500-5 6.500-6q-2.500 2.500-1.500 6.500q1.500 5 6.500 7.500z" fill="#0c59a4"/><path d="M908.500 1059q2.500 1.500 1.500 5h5q-2 3.500-6 3.500q-4-2-3.500-6q.8-2.500 3-2.500z" fill="#25363f"/>
<path d="M949.500 1049h15v17l1.300 3h-17.800l1.500-3z" fill="#dfe7f3"/><rect x="950.500" y="1050" width="13" height="15" fill="#f4f7fc"/><path d="M948 1066.500h17.800v2.500h-17.800z" fill="#aebad0"/>
<text x="956" y="1061" font-family="Liberation Serif,serif" font-size="10" fill="#e8954a" text-anchor="middle">A</text><path d="M959 1055h3.500M959 1057.500h3.500" stroke="#7aa0d8" stroke-width=".9"/>
<circle cx="1006" cy="1059.700" r="11.500" fill="#1ed760"/><g fill="none" stroke="#14301c" stroke-linecap="round"><path d="M999 1056q7.500-2.300 14.500 1.200" stroke-width="2.300"/><path d="M999.800 1060.300q6.500-1.800 12.300 1.100" stroke-width="1.900"/><path d="M1000.600 1064.200q5.500-1.400 10.200.9" stroke-width="1.500"/></g>
<rect x="1048" y="1049.400" width="12" height="9" rx="1" fill="#33c481"/><rect x="1052" y="1055" width="12" height="9" rx="1" fill="#21a366"/><rect x="1055.500" y="1061" width="11.200" height="9" rx="1" fill="#185c37"/><rect x="1048" y="1058" width="8" height="8" fill="#107c41"/><rect x="1042.300" y="1053.500" width="13" height="13" rx="1.200" fill="#107c41"/>
<text x="1048.800" y="1064" font-family="Liberation Sans,sans-serif" font-weight="bold" font-size="10.500" fill="#fff" text-anchor="middle">P</text>
<rect x="447" y="1078" width="30.5" height="2" fill="#92b2d2"/>
<rect x="479" y="1078" width="7.7" height="2" fill="#92b2d2"/>
<rect x="692" y="1078" width="40" height="2" fill="#92b2d2"/>
<rect x="741" y="1078" width="40" height="2" fill="#92b2d2"/>
<rect x="936.8" y="1078" width="39.9" height="2" fill="#92b2d2"/>
<rect x="1035.2" y="1078" width="30.8" height="2" fill="#92b2d2"/>
<rect x="1067.5" y="1078" width="7.5" height="2" fill="#92b2d2"/>
<path d="M1520.500 1066.700a5 5 0 0 1-.8-9.900a7 7 0 0 1 13.300-1.500a5.800 5.800 0 0 1 .500 11.400z" fill="url(#gc)"/>
<path d="M1643 1063l6-6 6 6" fill="none" stroke="#f2f2f2" stroke-width="1.400"/>
<g fill="none" stroke="#f2f2f2" stroke-width="1.100"><rect x="1668.500" y="1055.500" width="7.500" height="8.500" rx="1.500"/><path d="M1676 1058.500l3-1.800v6.600l-3-1.800"/><path d="M1669.500 1053.300q4-2.300 8 0M1669.500 1066.300q4 2.300 8 0"/></g>
<g fill="none" stroke="#f2f2f2" stroke-width="1.100"><path d="M1689.500 1057.500h3l4-3.800v12.600l-4-3.800h-3z"/><path d="M1698.500 1057q2 3 0 6M1701 1055q3.300 5 0 10M1703.500 1053q4.800 7 0 14"/></g>
<g fill="none" stroke="#f2f2f2" stroke-width="1.300"><path d="M1717 1066.500a10.500 10.500 0 0 1 10.500-10.500M1720.300 1066.500a7.200 7.200 0 0 1 7.200-7.200M1723.600 1066.500a3.900 3.900 0 0 1 3.900-3.900"/></g><circle cx="1727" cy="1066" r="1.400" fill="#f2f2f2"/>
<g fill="none" stroke="#f2f2f2" stroke-width="1.100"><rect x="1737.200" y="1053.500" width="22.500" height="12" rx="1"/><path d="M1740 1056.500h17M1740 1059.300h17" stroke-dasharray="1.300 1.200"/><path d="M1742.500 1062.500h12"/></g>
<path d="M1879.500 1053h15v11h-5.500l-2.500 3-2.500-3h-4.500z" fill="none" stroke="#f2f2f2" stroke-width="1.200"/>
<rect x="1915" y="1042" width="1" height="38" fill="#4a5568"/>
</svg>
<div class="t" id="tw1" style="top:12px;font-size:14px;line-height:18px;color:#fff;left:1547px;">6°C</div>
<div class="t" id="tw2" style="top:12px;font-size:14px;line-height:18px;color:#fff;left:1577.4px;">Bewölkt</div>
<div class="t" id="tdeu" style="top:12px;font-size:12px;line-height:16px;color:#fff;left:1772px;">DEU</div>
<div class="t" id="ttime" style="top:3.3px;font-size:12px;line-height:16px;color:#fff;left:1793.5px;width:80px;text-align:center;">22:47</div>
<div class="t" id="tdate" style="top:21.2px;font-size:12px;line-height:16px;color:#fff;left:1793.7px;width:80px;text-align:center;">22.11.2021</div>

  <div class="t" id="tsr" style="left:88px;top:11.700px;font-size:15px;line-height:18px;color:#3c3c3c">Zur Suche Text hier eingeben</div>
</div>
</body>
</html>
